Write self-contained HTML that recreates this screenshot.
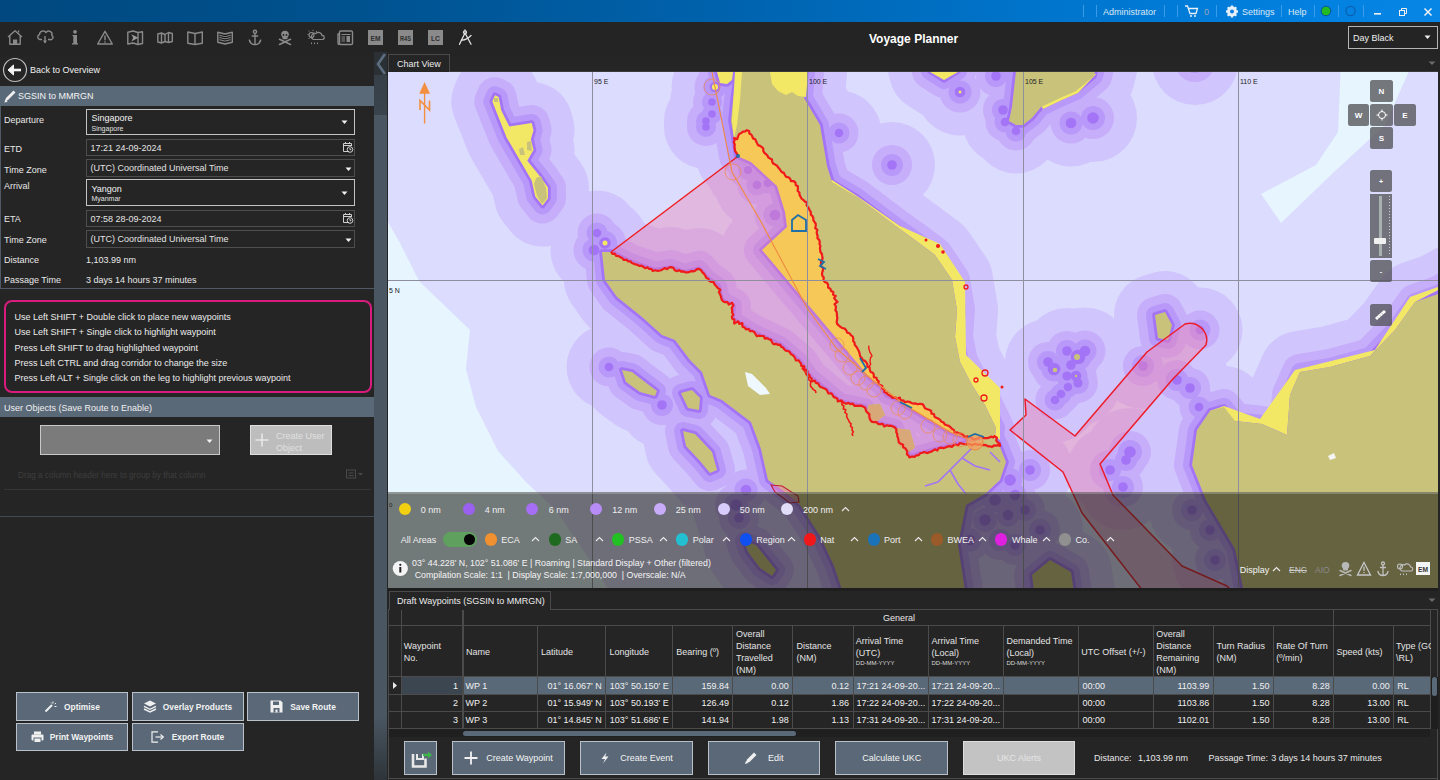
<!DOCTYPE html>
<html><head><meta charset="utf-8">
<style>
*{box-sizing:border-box}
html,body{margin:0;padding:0}
body{width:1440px;height:780px;overflow:hidden;background:#252525;position:relative;font-family:"Liberation Sans",sans-serif;font-size:9px;color:#e4e4e4}
.a{position:absolute}
.t{position:absolute;white-space:nowrap;line-height:12px}
.btn{position:absolute;background:#5a6877;border:1px solid #b9c2cb;color:#f2f2f2;font-weight:bold;font-size:8.4px;display:flex;align-items:center;justify-content:center;white-space:nowrap}
svg{position:absolute;overflow:visible}

</style></head>
<body>
<div class="a" style="left:0;top:0;width:1440px;height:22px;background:linear-gradient(90deg,#00487f 0%,#00528f 25%,#0062ad 50%,#0073c9 70%,#007ddb 85%,#0786e6 100%)"></div>
<svg style="left:0;top:0" width="1440" height="22">
<g stroke="#3a9be8" stroke-width="1">
<line x1="1083.5" y1="5" x2="1083.5" y2="17"/><line x1="1096.5" y1="5" x2="1096.5" y2="17"/>
<line x1="1164.5" y1="5" x2="1164.5" y2="17"/><line x1="1177.5" y1="5" x2="1177.5" y2="17"/>
<line x1="1216.5" y1="5" x2="1216.5" y2="17"/><line x1="1281.5" y1="5" x2="1281.5" y2="17"/>
<line x1="1314.5" y1="5" x2="1314.5" y2="17"/><line x1="1338.5" y1="5" x2="1338.5" y2="17"/>
<line x1="1363.5" y1="5" x2="1363.5" y2="17"/>
</g>
<!-- cart -->
<g fill="none" stroke="#e8f0f8" stroke-width="1.3">
<path d="M1185 6 L1187.5 6 L1190 13.5 L1196 13.5 L1197.5 8.5 L1188.5 8.5"/>
</g>
<circle cx="1191" cy="16" r="1" fill="#e8f0f8"/><circle cx="1195" cy="16" r="1" fill="#e8f0f8"/>
<!-- gear -->
<g transform="translate(1232,11.5)">
<circle r="3.8" fill="none" stroke="#e8f0f8" stroke-width="2.2"/>
<g fill="#e8f0f8"><rect x="-1.2" y="-6" width="2.4" height="12"/><rect x="-6" y="-1.2" width="12" height="2.4"/>
<rect x="-1.2" y="-6" width="2.4" height="12" transform="rotate(45)"/><rect x="-1.2" y="-6" width="2.4" height="12" transform="rotate(-45)"/></g>
<circle r="2" fill="#0a7fdf"/>
</g>
<circle cx="1326" cy="11" r="4.8" fill="#22bb22" stroke="#0a4f9a" stroke-width="1"/>
<circle cx="1350.5" cy="11" r="4.6" fill="none" stroke="#0a5fb0" stroke-width="1.3"/>
<rect x="1374" y="13" width="7" height="1.6" fill="#f0f0f0"/>
<g fill="none" stroke="#f0f0f0" stroke-width="1"><rect x="1399.5" y="10.5" width="5" height="5"/><path d="M1401.5 10.5 V8.5 H1406.5 V13.5 H1404.5"/></g>
<g stroke="#f4f4f4" stroke-width="1.4"><line x1="1424.5" y1="8.5" x2="1431.5" y2="15.5"/><line x1="1431.5" y1="8.5" x2="1424.5" y2="15.5"/></g>
</svg>
<div class="t" style="left:1103px;top:6px;color:#dce8f4">Administrator</div>
<div class="t" style="left:1204px;top:6px;color:#9aa8b8">0</div>
<div class="t" style="left:1242px;top:6px;color:#dce8f4">Settings</div>
<div class="t" style="left:1288px;top:6px;color:#dce8f4">Help</div>
<div class="a" style="left:0;top:22px;width:1440px;height:34px;background:#242424"></div>
<svg style="left:0;top:0" width="480" height="56">
<g fill="none" stroke="#8a8a8a" stroke-width="1.4" stroke-linejoin="round">
<!-- house -->
<path d="M8 37 L15 30.8 L22 37"/><path d="M18.5 32.5 V30.5"/><path d="M9.8 35.5 V44.3 H20.2 V35.5"/>
<!-- cloud -->
<path d="M42 39.5 H39.8 A2.6 2.6 0 0 1 39.5 34.5 A3.6 3.6 0 0 1 46 32.5 A3.3 3.3 0 0 1 51.8 35.5 A2.2 2.2 0 0 1 50 39.5 H48"/>
<path d="M45 36 V43"/>
<!-- warning -->
<path d="M105 31.3 L112.3 44 H97.7 Z"/>
<!-- map play -->
<path d="M127.8 32.3 L133 31 L138 32.5 L142.5 31.8 V43.5 L138 44.5 L133 43 L127.8 44 Z"/><path d="M138 32.5 V44.5"/>
<!-- folded map -->
<path d="M157.8 34 L161.5 33 L165 34.5 L168.5 32.5 L172.3 33.5 V41.5 L168.5 42.5 L165 41.5 L161.5 43 L157.8 42 Z"/><path d="M161.5 33 V43"/><path d="M165 34.5 V41.5"/><path d="M168.5 32.5 V42.5"/>
<!-- open book -->
<path d="M187.8 32 L195 33.5 L202.3 32 V43.3 L195 44.5 L187.8 43.3 Z"/><path d="M195 33.5 V44.5"/>
<!-- book lines -->
<path d="M217.8 32.3 L225 34 L232.3 32.3 V42.3 L225 44 L217.8 42.3 Z"/>
<!-- news -->
<rect x="339.5" y="31" width="13" height="13.5" rx="1.2"/><path d="M339.5 34 H338 V43 Q338 44.5 339.5 44.5"/>
<!-- compass -->
</g>
<g stroke="#8a8a8a" stroke-width="1">
<path d="M219.3 35.3 L225 36.6 L230.7 35.3 M219.3 37.5 L225 38.8 L230.7 37.5 M219.3 39.7 L225 41 L230.7 39.7"/>
<path d="M341.5 34.5 H350.5 M341.5 37 H345 M341.5 39 H345 M341.5 41 H345"/>
</g>
<rect x="346.5" y="36" width="3.5" height="6" fill="#8a8a8a"/>
<path d="M131.3 34.2 L138.3 37.8 L131.3 41.4 L133.2 37.8 Z" fill="#9a9a9a"/>
<g fill="#8a8a8a">
<rect x="13" y="39.5" width="4.2" height="5"/>
<path d="M43 40.5 H47 L45 43.5 Z"/>
<circle cx="75" cy="31.8" r="1.9"/><path d="M72.6 35 H77 V43.3 H78 V44.6 H72 V43.3 H73.3 V36.3 H72.6 Z"/>
<rect x="104.3" y="35.5" width="1.4" height="4.8"/><rect x="104.3" y="41.3" width="1.4" height="1.4"/>
</g>
<!-- anchor -->
<g fill="none" stroke="#8a8a8a" stroke-width="1.4" stroke-linecap="round">
<circle cx="255" cy="31.8" r="1.6"/><path d="M255 33.5 V44.5"/><path d="M252.3 36 H257.7"/><path d="M249.5 40.3 Q250.5 44.5 255 44.6 Q259.5 44.5 260.5 40.3"/>
</g>
<g fill="#8a8a8a"><path d="M248.6 39.5 L251 41.2 L249.2 42 Z"/><path d="M261.4 39.5 L259 41.2 L260.8 42 Z"/></g>
<!-- skull -->
<g fill="#8a8a8a">
<ellipse cx="285" cy="34.3" rx="3.8" ry="3.6"/><rect x="282.5" y="36" width="5" height="3.3" rx="1"/>
</g>
<g fill="#242424"><circle cx="283.5" cy="35" r="0.9"/><circle cx="286.5" cy="35" r="0.9"/></g>
<g stroke="#8a8a8a" stroke-width="1.6" stroke-linecap="round"><path d="M279.5 39.3 L290.5 44.5 M290.5 39.3 L279.5 44.5"/></g>
<!-- weather -->
<g fill="none" stroke="#8a8a8a" stroke-width="1.2">
<path d="M313.5 39.5 A3 3 0 0 1 316 33.5 A3.5 3.5 0 0 1 322 35.5 A2 2 0 0 1 322.5 39.5 Z"/>
<circle cx="311.5" cy="35" r="2.5"/>
</g>
<g fill="#8a8a8a"><circle cx="309" cy="31" r="0.6"/><circle cx="313" cy="30.3" r="0.6"/><circle cx="316.5" cy="31.3" r="0.6"/><circle cx="308" cy="34.5" r="0.6"/><circle cx="309" cy="38.5" r="0.6"/>
<rect x="311" y="42.5" width="1" height="1.6"/><rect x="314" y="42.5" width="1" height="1.6"/><rect x="317" y="42.5" width="1" height="1.6"/></g>
<!-- boxes -->
<rect x="368" y="30" width="15" height="15" fill="#8a8a8a"/>
<rect x="398" y="30" width="15" height="15" fill="#8a8a8a"/>
<rect x="428" y="30" width="15" height="15" fill="#8a8a8a"/>
<g fill="#2e2e2e" font-family="Liberation Sans" font-weight="bold">
<text x="375.5" y="41" font-size="7.5" text-anchor="middle" textLength="10" lengthAdjust="spacingAndGlyphs">EM</text>
<text x="405.5" y="40.8" font-size="7" text-anchor="middle" textLength="11" lengthAdjust="spacingAndGlyphs">R4S</text>
<text x="435.5" y="41.2" font-size="8" text-anchor="middle" textLength="9" lengthAdjust="spacingAndGlyphs">LC</text>
</g>
<!-- compass -->
<g fill="none" stroke="#e4e4e4" stroke-width="1.3" stroke-linecap="round">
<path d="M465 33 L459.5 44.3"/><path d="M465 33 L471 44.3"/><circle cx="465" cy="32.3" r="1.5"/><path d="M465 30 V30.8"/><path d="M461.5 40 Q466 40.5 471 35.5"/>
</g>
</svg>
<div class="t" style="left:869px;top:32.3px;font-size:12px;font-weight:bold;color:#fff;line-height:14px">Voyage Planner</div>
<div class="a" style="left:1348px;top:26px;width:90px;height:23px;border:1px solid #b4b4b4"></div>
<div class="t" style="left:1353px;top:32px;color:#f0f0f0">Day Black</div>
<svg style="left:1424px;top:35px" width="8" height="5"><path d="M0.5 0.5 H6.5 L3.5 4 Z" fill="#f0f0f0"/></svg>
<svg style="left:0;top:56px" width="40" height="30"><circle cx="15" cy="14" r="11.5" fill="none" stroke="#bdbdbd" stroke-width="1.2"/><path d="M9 14 H21" stroke="#f4f4f4" stroke-width="2.6"/><path d="M8 14 L13.5 9 L13.5 19 Z" fill="#f4f4f4" stroke="#f4f4f4" stroke-width="1" stroke-linejoin="round"/></svg>
<div class="t" style="left:30px;top:64.16px;font-size:9px;color:#f0f0f0;">Back to Overview</div>
<div class="a" style="left:0px;top:86px;width:375px;height:20px;background:#5a6978"></div>
<svg style="left:3px;top:88px" width="14" height="16"><path d="M2 13.5 L3 10 L10.5 2.5 L12.5 4.5 L5 12 Z" fill="#f0f0f0"/><path d="M1.5 14.5 L2.3 11.3 L4.7 13.7 Z" fill="#f0f0f0"/></svg>
<div class="t" style="left:18px;top:90.46px;font-size:9px;color:#f4f4f4;">SGSIN to MMRGN</div>
<div class="a" style="left:0px;top:106px;width:1px;height:183px;background:#4f5a66"></div>
<div class="a" style="left:0px;top:288px;width:375px;height:1px;background:#4f5a66"></div>
<div class="t" style="left:4px;top:113.66px;font-size:9px;color:#e8e8e8;">Departure</div>
<div class="t" style="left:4px;top:142.66px;font-size:9px;color:#e8e8e8;">ETD</div>
<div class="t" style="left:4px;top:163.56px;font-size:9px;color:#e8e8e8;">Time Zone</div>
<div class="t" style="left:4px;top:180.46px;font-size:9px;color:#e8e8e8;">Arrival</div>
<div class="t" style="left:4px;top:213.16px;font-size:9px;color:#e8e8e8;">ETA</div>
<div class="t" style="left:4px;top:233.56px;font-size:9px;color:#e8e8e8;">Time Zone</div>
<div class="t" style="left:4px;top:254.46px;font-size:9px;color:#e8e8e8;">Distance</div>
<div class="t" style="left:4px;top:273.86px;font-size:9px;color:#e8e8e8;">Passage Time</div>
<div class="a" style="left:86px;top:109px;width:269px;height:26px;border:1px solid #c4c4c4"></div>
<div class="t" style="left:91.5px;top:111.66px;font-size:9px;color:#f2f2f2;">Singapore</div>
<div class="t" style="left:91.5px;top:122.93px;font-size:7px;color:#e0e0e0;">Singapore</div>
<div class="a" style="left:86px;top:179px;width:269px;height:27px;border:1px solid #c4c4c4"></div>
<div class="t" style="left:91.5px;top:182.76px;font-size:9px;color:#f2f2f2;">Yangon</div>
<div class="t" style="left:91.5px;top:193.43px;font-size:7px;color:#e0e0e0;">Myanmar</div>
<svg style="left:341.0px;top:119.5px" width="8" height="5"><path d="M0.5 0.5 H6.5 L3.5 4 Z" fill="#f0f0f0"/></svg>
<svg style="left:341.0px;top:190.5px" width="8" height="5"><path d="M0.5 0.5 H6.5 L3.5 4 Z" fill="#f0f0f0"/></svg>
<div class="a" style="left:86px;top:139px;width:269px;height:17px;border:1px solid #4e4e4e"></div>
<div class="t" style="left:90.5px;top:141.86px;font-size:9px;color:#e4e4e4;">17:21 24-09-2024</div>
<svg style="left:342px;top:141px" width="12" height="13"><g fill="none" stroke="#cfcfcf" stroke-width="1"><path d="M7 10.5 H1.5 V2.5 H9.5 V5"/><path d="M1.5 4.5 H9.5"/><circle cx="8" cy="8.5" r="2.8"/><path d="M8 7 V8.7 H9.3"/><path d="M3.5 1 V3 M7.5 1 V3"/></g></svg>
<div class="a" style="left:86px;top:210px;width:269px;height:17px;border:1px solid #4e4e4e"></div>
<div class="t" style="left:90.5px;top:212.86px;font-size:9px;color:#e4e4e4;">07:58 28-09-2024</div>
<svg style="left:342px;top:212px" width="12" height="13"><g fill="none" stroke="#cfcfcf" stroke-width="1"><path d="M7 10.5 H1.5 V2.5 H9.5 V5"/><path d="M1.5 4.5 H9.5"/><circle cx="8" cy="8.5" r="2.8"/><path d="M8 7 V8.7 H9.3"/><path d="M3.5 1 V3 M7.5 1 V3"/></g></svg>
<div class="a" style="left:86px;top:159px;width:269px;height:18px;border:1px solid #4e4e4e"></div>
<div class="t" style="left:90.5px;top:162.16px;font-size:9px;color:#e4e4e4;">(UTC) Coordinated Universal Time</div>
<svg style="left:345.0px;top:166.5px" width="8" height="5"><path d="M0.5 0.5 H6.5 L3.5 4 Z" fill="#f0f0f0"/></svg>
<div class="a" style="left:86px;top:230px;width:269px;height:18px;border:1px solid #4e4e4e"></div>
<div class="t" style="left:90.5px;top:233.16px;font-size:9px;color:#e4e4e4;">(UTC) Coordinated Universal Time</div>
<svg style="left:345.0px;top:237.5px" width="8" height="5"><path d="M0.5 0.5 H6.5 L3.5 4 Z" fill="#f0f0f0"/></svg>
<div class="t" style="left:86px;top:254.46px;font-size:9px;color:#e8e8e8;">1,103.99 nm</div>
<div class="t" style="left:86px;top:273.86px;font-size:9px;color:#e8e8e8;">3 days 14 hours 37 minutes</div>
<div class="a" style="left:3.5px;top:300px;width:368px;height:93px;border:2px solid #d81b7e;border-radius:8px"></div>
<div class="t" style="left:14.5px;top:311.36px;font-size:9px;color:#ececec;">Use Left SHIFT + Double click to place new waypoints</div>
<div class="t" style="left:14.5px;top:326.43px;font-size:9px;color:#ececec;">Use Left SHIFT + Single click to highlight waypoint</div>
<div class="t" style="left:14.5px;top:341.50px;font-size:9px;color:#ececec;">Press Left SHIFT to drag highlighted waypoint</div>
<div class="t" style="left:14.5px;top:356.57px;font-size:9px;color:#ececec;">Press Left CTRL and drag corridor to change the size</div>
<div class="t" style="left:14.5px;top:371.64px;font-size:9px;color:#ececec;">Press Left ALT + Single click on the leg to highlight previous waypoint</div>
<div class="a" style="left:0px;top:397px;width:375px;height:20px;background:#5a6978"></div>
<div class="t" style="left:4px;top:401.56px;font-size:9px;color:#f0f0f0;">User Objects (Save Route to Enable)</div>
<div class="a" style="left:40px;top:425px;width:180px;height:30px;background:#7b7b7b;border:1px solid #c8c8c8"></div>
<svg style="left:206.0px;top:438.5px" width="8" height="5"><path d="M0.5 0.5 H6.5 L3.5 4 Z" fill="#f0f0f0"/></svg>
<div class="a" style="left:250px;top:425px;width:82px;height:30px;background:#bdbdbd;border:1px solid #dedede"></div>
<svg style="left:254px;top:432px" width="16" height="16"><path d="M8 1.5 V14.5 M1.5 8 H14.5" stroke="#e6e6e6" stroke-width="1.6"/></svg>
<div class="t" style="left:276px;top:429.66px;font-size:9px;color:#e0e0e0;">Create User</div>
<div class="t" style="left:276px;top:441.66px;font-size:9px;color:#e0e0e0;">Object</div>
<div class="t" style="left:18px;top:469.55px;font-size:8.2px;color:#3e3e3e;">Drag a column header here to group by that column</div>
<svg style="left:345px;top:468px" width="22" height="14"><rect x="1.5" y="2" width="9" height="8" fill="none" stroke="#4a4a4a" stroke-width="1"/><path d="M3.5 5 H8.5 M3.5 7.5 H8.5" stroke="#4a4a4a"/><path d="M13 5 H18 L15.5 7.5 Z" fill="#4a4a4a"/></svg>
<div class="a" style="left:4px;top:489px;width:367px;height:1px;background:#353535"></div>
<div class="a" style="left:0px;top:516px;width:375px;height:1px;background:#414b55"></div>
<div class="a" style="left:374px;top:52px;width:13px;height:728px;background:linear-gradient(180deg,#2b3035 0px,#2b3035 23px,#363f47 23px,#3a444d 63px,#4a5763 63px,#4a5763 663px,#2e3439 728px)"></div>
<svg style="left:375px;top:52px" width="12" height="36"><path d="M10 2 L3 12 L10 22" fill="none" stroke="#5b6f80" stroke-width="2.6"/></svg>
<div class="btn" style="left:16px;top:692px;width:112px;height:29px"><svg width="14" height="12" style="position:relative;margin-right:6px"><path d="M1.5 10.5 L8 4" stroke="#f0f0f0" stroke-width="2"/><path d="M9 0.5 V2.5 M12 2 L10.8 3.2 M12.5 5.5 H10.5 M7 1.5 L8 2.5" stroke="#f0f0f0" stroke-width="1"/></svg><span>Optimise</span></div>
<div class="btn" style="left:131.5px;top:692px;width:112px;height:29px"><svg width="14" height="13" style="position:relative;margin-right:6px"><path d="M7 0.5 L13 3.5 L7 6.5 L1 3.5 Z" fill="#f0f0f0"/><path d="M1 6.3 L7 9.3 L13 6.3 M1 9 L7 12 L13 9" fill="none" stroke="#f0f0f0" stroke-width="1.4"/></svg><span>Overlay Products</span></div>
<div class="btn" style="left:247px;top:692px;width:112px;height:29px"><svg width="13" height="13" style="position:relative;margin-right:7px"><path d="M0.5 0.5 H10.5 L12.5 2.5 V12.5 H0.5 Z" fill="#f0f0f0"/><rect x="3" y="1.5" width="6" height="3.5" fill="#5a6877"/><rect x="3.5" y="8" width="6" height="4.5" fill="#5a6877"/><rect x="5.5" y="9.5" width="2" height="3" fill="#f0f0f0"/></svg><span>Save Route</span></div>
<div class="btn" style="left:16px;top:722.5px;width:112px;height:28px"><svg width="13" height="12" style="position:relative;margin-right:6px"><rect x="3" y="0.5" width="7" height="3" fill="#f0f0f0"/><rect x="0.5" y="3.5" width="12" height="6" rx="1" fill="#f0f0f0"/><rect x="3" y="7" width="7" height="4.5" fill="#f0f0f0" stroke="#5a6877" stroke-width="1"/></svg><span>Print Waypoints</span></div>
<div class="btn" style="left:131.5px;top:722.5px;width:112px;height:28px"><svg width="14" height="12" style="position:relative;margin-right:7px"><path d="M7 0.8 H1 V11.2 H7" fill="none" stroke="#f0f0f0" stroke-width="1.2"/><path d="M4.5 6 H12" stroke="#f0f0f0" stroke-width="1.2"/><path d="M9.5 3.5 L12.3 6 L9.5 8.5" fill="none" stroke="#f0f0f0" stroke-width="1.2"/></svg><span>Export Route</span></div><svg style="left:388px;top:72px;overflow:hidden" width="1050" height="516" viewBox="388 72 1050 516">
<rect x="388" y="72" width="1050" height="516" fill="#dcdcfe"/>
<path d="M388,222 L400,243 L419,281 L470,330 L466,369 L476,407 L498,451 L526,482 L556,510 L590,560 L615,600 L388,600 Z" fill="#e6f5fe"/>
<path d="M1341,60 L1338,132 L1316,165 L1261,194 L1281,223 L1334,172 L1385,125 L1414,60 Z" fill="#e6f5fe"/>
<g fill="#d0c5fc" stroke="#d0c5fc" stroke-width="82" stroke-linejoin="round"><path d="M717,60 L733,60 L733,72 L732,80 L727,84 L720,83 L717,72 Z"/><path d="M602,252 L605,280 L617,297 L642,317 L662,335 L675,340 L690,360 L702,372 L710,395 L722,400 L751,422 L761,449 L768,480 L786,493 L800,505 L820,536 L834,566 L842,590 L850,640 L960,640 L965,590 L958,545 L966,505 L985,494 L1000,480 L1006,462 L1000,447 L995,437 L960,444 L935,450 L910,457 L900,442 L895,428 L872,422 L865,407 L840,402 L810,377 L800,362 L780,345 L752,332 L732,319 L733,306 L721,300 L718,286 L708,279 L699,269 L685,273 L671,268 L655,270.6 L630,262 L611,252 Z"/><path d="M737,50 L737,71 L733,100 L731,121 L734,138 L747,130 L760,146 L780,171 L795,183 L803,200 L814,220 L821,250 L823,278 L835,296 L837,324 L851,335 L862,358 L869,368 L877,380 L887,395 L905,402 L922,405 L940,420 L955,432 L975,440 L995,436 L996,428 L985,405 L972,385 L960,362 L955,337 L957,310 L952,280 L935,255 L915,240 L897,227 L857,197 L832,182 L827,166 L820,125 L804,98 L806,71 L806,50 Z"/><path d="M1016,50 L1016,71 L1012,107 L1009,121 L1016,125 L1023,125 L1032,118 L1041,107 L1060,98 L1076,91 L1094,76 L1100,50 Z"/><path d="M925,50 L930,71 L944,80 L958,71 L965,50 Z"/><path d="M1192,465 L1197,430 L1210,411 L1224,407 L1235,421 L1262,424 L1287,435 L1290,395 L1300,372 L1330,367 L1370,356 L1395,330 L1415,302 L1438,294 L1500,260 L1500,700 L1243,700 L1243,588 L1235,549 L1206,500 Z"/><path d="M1032,575 L1050,560 L1071,572 L1075,600 L1035,600 Z"/><path d="M495,95.2 L498.6,97 L501.3,110.5 L509.3,126.6 L531.7,123 L533.5,130.2 L530.9,139.2 L533.5,150 L527.3,160.7 L538.9,175 L547.9,187.6 L547.9,198.4 L542.5,205.6 L535.3,196.6 L531.7,180.4 L506.6,137.4 L492.3,101.5 Z"/><path d="M622,370 L632,372 L645,382 L657,391 L655,396 L640,392 L626,382 Z"/><path d="M681,393 L692,390 L700,398 L699,410 L688,408 Z"/><path d="M683,431 L695,434 L712,452 L717,470 L710,473 L700,461 L686,446 Z"/><path d="M744,541 L756,545 L776,570 L772,576 L760,568 L748,552 Z"/><path d="M1155,315 L1165,312 L1172,325 L1168,340 L1158,338 Z"/><path d="M737,156 L734,138 L747,130 L760,146 L780,171 L795,183 L803,200 L814,220 L821,250 L823,278 L835,296 L837,324 L851,335 L862,358 L869,368 L877,380 L887,395 L905,402 L922,405 L940,420 L955,432 L975,440 L950,432 L905,405 L869,377 L762,250 L787,227 L785,212 L777,186 L751,162 Z"/></g><g fill="#d0c5fc"><circle cx="757" cy="185" r="42.5"/><circle cx="768" cy="183" r="42.5"/><circle cx="775" cy="215" r="43.5"/><circle cx="748" cy="170" r="42.2"/><circle cx="715" cy="87" r="43.5"/><circle cx="712" cy="102" r="42"/><circle cx="712" cy="114" r="42"/><circle cx="706" cy="121" r="42"/><circle cx="706" cy="127" r="42"/><circle cx="597" cy="233" r="42.5"/><circle cx="605" cy="243" r="44"/><circle cx="594" cy="250" r="43.5"/><circle cx="609" cy="367" r="42.5"/><circle cx="662" cy="405" r="43"/><circle cx="746" cy="490" r="43.5"/><circle cx="736" cy="505" r="44"/><circle cx="739" cy="518" r="43"/><circle cx="839" cy="133" r="42.5"/><circle cx="892" cy="165" r="43"/><circle cx="960" cy="92" r="43.5"/><circle cx="996" cy="76" r="43"/><circle cx="1003" cy="110" r="43"/><circle cx="1005" cy="122" r="42.5"/><circle cx="1016" cy="131" r="42.5"/><circle cx="1054" cy="369" r="44.5"/><circle cx="1078" cy="357" r="45.5"/><circle cx="1067" cy="351" r="43"/><circle cx="1085" cy="351" r="43.5"/><circle cx="1067" cy="376" r="42.8"/><circle cx="1076" cy="376" r="43.5"/><circle cx="1078" cy="383" r="42.8"/><circle cx="1068" cy="387" r="42.5"/><circle cx="1061" cy="394" r="42.5"/><circle cx="1048" cy="362" r="43"/><circle cx="1071" cy="365" r="43"/><circle cx="1143" cy="366" r="43"/><circle cx="1071" cy="123" r="43.5"/><circle cx="1093" cy="118" r="44"/><circle cx="1195" cy="62" r="43"/><circle cx="1177" cy="380" r="43"/><circle cx="1190" cy="388" r="43"/><circle cx="1199" cy="407" r="42.5"/><circle cx="1130" cy="452" r="44"/><circle cx="1126" cy="460" r="43"/><circle cx="1110" cy="470" r="43"/><circle cx="1123" cy="487" r="43"/><circle cx="1055" cy="400" r="42.5"/><circle cx="1200" cy="330" r="42.5"/><circle cx="1228" cy="418" r="42.5"/><circle cx="1218" cy="440" r="42.5"/><circle cx="1211" cy="464" r="42.5"/><circle cx="1214" cy="486" r="42.5"/><circle cx="1192" cy="510" r="43"/><circle cx="1210" cy="530" r="43"/><circle cx="1226" cy="528" r="43"/><circle cx="1215" cy="560" r="43"/><circle cx="990" cy="455" r="44"/><circle cx="1000" cy="468" r="44"/><circle cx="985" cy="478" r="43.5"/><circle cx="1010" cy="480" r="44"/><circle cx="1015" cy="495" r="43.5"/><circle cx="975" cy="490" r="43"/><circle cx="995" cy="500" r="44"/><circle cx="1008" cy="515" r="43.5"/><circle cx="985" cy="520" r="44"/><circle cx="970" cy="540" r="43.5"/><circle cx="1000" cy="540" r="43"/><circle cx="1025" cy="510" r="43"/><circle cx="1015" cy="545" r="43"/><circle cx="1040" cy="530" r="43"/><circle cx="1030" cy="470" r="43"/></g>
<g fill="#c6aefa" stroke="#c6aefa" stroke-width="36" stroke-linejoin="round"><path d="M717,60 L733,60 L733,72 L732,80 L727,84 L720,83 L717,72 Z"/><path d="M602,252 L605,280 L617,297 L642,317 L662,335 L675,340 L690,360 L702,372 L710,395 L722,400 L751,422 L761,449 L768,480 L786,493 L800,505 L820,536 L834,566 L842,590 L850,640 L960,640 L965,590 L958,545 L966,505 L985,494 L1000,480 L1006,462 L1000,447 L995,437 L960,444 L935,450 L910,457 L900,442 L895,428 L872,422 L865,407 L840,402 L810,377 L800,362 L780,345 L752,332 L732,319 L733,306 L721,300 L718,286 L708,279 L699,269 L685,273 L671,268 L655,270.6 L630,262 L611,252 Z"/><path d="M737,50 L737,71 L733,100 L731,121 L734,138 L747,130 L760,146 L780,171 L795,183 L803,200 L814,220 L821,250 L823,278 L835,296 L837,324 L851,335 L862,358 L869,368 L877,380 L887,395 L905,402 L922,405 L940,420 L955,432 L975,440 L995,436 L996,428 L985,405 L972,385 L960,362 L955,337 L957,310 L952,280 L935,255 L915,240 L897,227 L857,197 L832,182 L827,166 L820,125 L804,98 L806,71 L806,50 Z"/><path d="M1016,50 L1016,71 L1012,107 L1009,121 L1016,125 L1023,125 L1032,118 L1041,107 L1060,98 L1076,91 L1094,76 L1100,50 Z"/><path d="M925,50 L930,71 L944,80 L958,71 L965,50 Z"/><path d="M1192,465 L1197,430 L1210,411 L1224,407 L1235,421 L1262,424 L1287,435 L1290,395 L1300,372 L1330,367 L1370,356 L1395,330 L1415,302 L1438,294 L1500,260 L1500,700 L1243,700 L1243,588 L1235,549 L1206,500 Z"/><path d="M1032,575 L1050,560 L1071,572 L1075,600 L1035,600 Z"/><path d="M495,95.2 L498.6,97 L501.3,110.5 L509.3,126.6 L531.7,123 L533.5,130.2 L530.9,139.2 L533.5,150 L527.3,160.7 L538.9,175 L547.9,187.6 L547.9,198.4 L542.5,205.6 L535.3,196.6 L531.7,180.4 L506.6,137.4 L492.3,101.5 Z"/><path d="M622,370 L632,372 L645,382 L657,391 L655,396 L640,392 L626,382 Z"/><path d="M681,393 L692,390 L700,398 L699,410 L688,408 Z"/><path d="M683,431 L695,434 L712,452 L717,470 L710,473 L700,461 L686,446 Z"/><path d="M744,541 L756,545 L776,570 L772,576 L760,568 L748,552 Z"/><path d="M1155,315 L1165,312 L1172,325 L1168,340 L1158,338 Z"/><path d="M737,156 L734,138 L747,130 L760,146 L780,171 L795,183 L803,200 L814,220 L821,250 L823,278 L835,296 L837,324 L851,335 L862,358 L869,368 L877,380 L887,395 L905,402 L922,405 L940,420 L955,432 L975,440 L950,432 L905,405 L869,377 L762,250 L787,227 L785,212 L777,186 L751,162 Z"/></g><g fill="#c6aefa"><circle cx="757" cy="185" r="19.5"/><circle cx="768" cy="183" r="19.5"/><circle cx="775" cy="215" r="20.5"/><circle cx="748" cy="170" r="19.2"/><circle cx="715" cy="87" r="20.5"/><circle cx="712" cy="102" r="19"/><circle cx="712" cy="114" r="19"/><circle cx="706" cy="121" r="19"/><circle cx="706" cy="127" r="19"/><circle cx="597" cy="233" r="19.5"/><circle cx="605" cy="243" r="21"/><circle cx="594" cy="250" r="20.5"/><circle cx="609" cy="367" r="19.5"/><circle cx="662" cy="405" r="20"/><circle cx="746" cy="490" r="20.5"/><circle cx="736" cy="505" r="21"/><circle cx="739" cy="518" r="20"/><circle cx="839" cy="133" r="19.5"/><circle cx="892" cy="165" r="20"/><circle cx="960" cy="92" r="20.5"/><circle cx="996" cy="76" r="20"/><circle cx="1003" cy="110" r="20"/><circle cx="1005" cy="122" r="19.5"/><circle cx="1016" cy="131" r="19.5"/><circle cx="1054" cy="369" r="21.5"/><circle cx="1078" cy="357" r="22.5"/><circle cx="1067" cy="351" r="20"/><circle cx="1085" cy="351" r="20.5"/><circle cx="1067" cy="376" r="19.8"/><circle cx="1076" cy="376" r="20.5"/><circle cx="1078" cy="383" r="19.8"/><circle cx="1068" cy="387" r="19.5"/><circle cx="1061" cy="394" r="19.5"/><circle cx="1048" cy="362" r="20"/><circle cx="1071" cy="365" r="20"/><circle cx="1143" cy="366" r="20"/><circle cx="1071" cy="123" r="20.5"/><circle cx="1093" cy="118" r="21"/><circle cx="1195" cy="62" r="20"/><circle cx="1177" cy="380" r="20"/><circle cx="1190" cy="388" r="20"/><circle cx="1199" cy="407" r="19.5"/><circle cx="1130" cy="452" r="21"/><circle cx="1126" cy="460" r="20"/><circle cx="1110" cy="470" r="20"/><circle cx="1123" cy="487" r="20"/><circle cx="1055" cy="400" r="19.5"/><circle cx="1200" cy="330" r="19.5"/><circle cx="1228" cy="418" r="19.5"/><circle cx="1218" cy="440" r="19.5"/><circle cx="1211" cy="464" r="19.5"/><circle cx="1214" cy="486" r="19.5"/><circle cx="1192" cy="510" r="20"/><circle cx="1210" cy="530" r="20"/><circle cx="1226" cy="528" r="20"/><circle cx="1215" cy="560" r="20"/><circle cx="990" cy="455" r="21"/><circle cx="1000" cy="468" r="21"/><circle cx="985" cy="478" r="20.5"/><circle cx="1010" cy="480" r="21"/><circle cx="1015" cy="495" r="20.5"/><circle cx="975" cy="490" r="20"/><circle cx="995" cy="500" r="21"/><circle cx="1008" cy="515" r="20.5"/><circle cx="985" cy="520" r="21"/><circle cx="970" cy="540" r="20.5"/><circle cx="1000" cy="540" r="20"/><circle cx="1025" cy="510" r="20"/><circle cx="1015" cy="545" r="20"/><circle cx="1040" cy="530" r="20"/><circle cx="1030" cy="470" r="20"/></g>
<g fill="#b898f8" stroke="#b898f8" stroke-width="18" stroke-linejoin="round"><path d="M717,60 L733,60 L733,72 L732,80 L727,84 L720,83 L717,72 Z"/><path d="M602,252 L605,280 L617,297 L642,317 L662,335 L675,340 L690,360 L702,372 L710,395 L722,400 L751,422 L761,449 L768,480 L786,493 L800,505 L820,536 L834,566 L842,590 L850,640 L960,640 L965,590 L958,545 L966,505 L985,494 L1000,480 L1006,462 L1000,447 L995,437 L960,444 L935,450 L910,457 L900,442 L895,428 L872,422 L865,407 L840,402 L810,377 L800,362 L780,345 L752,332 L732,319 L733,306 L721,300 L718,286 L708,279 L699,269 L685,273 L671,268 L655,270.6 L630,262 L611,252 Z"/><path d="M737,50 L737,71 L733,100 L731,121 L734,138 L747,130 L760,146 L780,171 L795,183 L803,200 L814,220 L821,250 L823,278 L835,296 L837,324 L851,335 L862,358 L869,368 L877,380 L887,395 L905,402 L922,405 L940,420 L955,432 L975,440 L995,436 L996,428 L985,405 L972,385 L960,362 L955,337 L957,310 L952,280 L935,255 L915,240 L897,227 L857,197 L832,182 L827,166 L820,125 L804,98 L806,71 L806,50 Z"/><path d="M1016,50 L1016,71 L1012,107 L1009,121 L1016,125 L1023,125 L1032,118 L1041,107 L1060,98 L1076,91 L1094,76 L1100,50 Z"/><path d="M925,50 L930,71 L944,80 L958,71 L965,50 Z"/><path d="M1192,465 L1197,430 L1210,411 L1224,407 L1235,421 L1262,424 L1287,435 L1290,395 L1300,372 L1330,367 L1370,356 L1395,330 L1415,302 L1438,294 L1500,260 L1500,700 L1243,700 L1243,588 L1235,549 L1206,500 Z"/><path d="M1032,575 L1050,560 L1071,572 L1075,600 L1035,600 Z"/><path d="M495,95.2 L498.6,97 L501.3,110.5 L509.3,126.6 L531.7,123 L533.5,130.2 L530.9,139.2 L533.5,150 L527.3,160.7 L538.9,175 L547.9,187.6 L547.9,198.4 L542.5,205.6 L535.3,196.6 L531.7,180.4 L506.6,137.4 L492.3,101.5 Z"/><path d="M622,370 L632,372 L645,382 L657,391 L655,396 L640,392 L626,382 Z"/><path d="M681,393 L692,390 L700,398 L699,410 L688,408 Z"/><path d="M683,431 L695,434 L712,452 L717,470 L710,473 L700,461 L686,446 Z"/><path d="M744,541 L756,545 L776,570 L772,576 L760,568 L748,552 Z"/><path d="M1155,315 L1165,312 L1172,325 L1168,340 L1158,338 Z"/><path d="M737,156 L734,138 L747,130 L760,146 L780,171 L795,183 L803,200 L814,220 L821,250 L823,278 L835,296 L837,324 L851,335 L862,358 L869,368 L877,380 L887,395 L905,402 L922,405 L940,420 L955,432 L975,440 L950,432 L905,405 L869,377 L762,250 L787,227 L785,212 L777,186 L751,162 Z"/></g><g fill="#b898f8"><circle cx="757" cy="185" r="10.5"/><circle cx="768" cy="183" r="10.5"/><circle cx="775" cy="215" r="11.5"/><circle cx="748" cy="170" r="10.2"/><circle cx="715" cy="87" r="11.5"/><circle cx="712" cy="102" r="10"/><circle cx="712" cy="114" r="10"/><circle cx="706" cy="121" r="10"/><circle cx="706" cy="127" r="10"/><circle cx="597" cy="233" r="10.5"/><circle cx="605" cy="243" r="12"/><circle cx="594" cy="250" r="11.5"/><circle cx="609" cy="367" r="10.5"/><circle cx="662" cy="405" r="11"/><circle cx="746" cy="490" r="11.5"/><circle cx="736" cy="505" r="12"/><circle cx="739" cy="518" r="11"/><circle cx="839" cy="133" r="10.5"/><circle cx="892" cy="165" r="11"/><circle cx="960" cy="92" r="11.5"/><circle cx="996" cy="76" r="11"/><circle cx="1003" cy="110" r="11"/><circle cx="1005" cy="122" r="10.5"/><circle cx="1016" cy="131" r="10.5"/><circle cx="1054" cy="369" r="12.5"/><circle cx="1078" cy="357" r="13.5"/><circle cx="1067" cy="351" r="11"/><circle cx="1085" cy="351" r="11.5"/><circle cx="1067" cy="376" r="10.8"/><circle cx="1076" cy="376" r="11.5"/><circle cx="1078" cy="383" r="10.8"/><circle cx="1068" cy="387" r="10.5"/><circle cx="1061" cy="394" r="10.5"/><circle cx="1048" cy="362" r="11"/><circle cx="1071" cy="365" r="11"/><circle cx="1143" cy="366" r="11"/><circle cx="1071" cy="123" r="11.5"/><circle cx="1093" cy="118" r="12"/><circle cx="1195" cy="62" r="11"/><circle cx="1177" cy="380" r="11"/><circle cx="1190" cy="388" r="11"/><circle cx="1199" cy="407" r="10.5"/><circle cx="1130" cy="452" r="12"/><circle cx="1126" cy="460" r="11"/><circle cx="1110" cy="470" r="11"/><circle cx="1123" cy="487" r="11"/><circle cx="1055" cy="400" r="10.5"/><circle cx="1200" cy="330" r="10.5"/><circle cx="1228" cy="418" r="10.5"/><circle cx="1218" cy="440" r="10.5"/><circle cx="1211" cy="464" r="10.5"/><circle cx="1214" cy="486" r="10.5"/><circle cx="1192" cy="510" r="11"/><circle cx="1210" cy="530" r="11"/><circle cx="1226" cy="528" r="11"/><circle cx="1215" cy="560" r="11"/><circle cx="990" cy="455" r="12"/><circle cx="1000" cy="468" r="12"/><circle cx="985" cy="478" r="11.5"/><circle cx="1010" cy="480" r="12"/><circle cx="1015" cy="495" r="11.5"/><circle cx="975" cy="490" r="11"/><circle cx="995" cy="500" r="12"/><circle cx="1008" cy="515" r="11.5"/><circle cx="985" cy="520" r="12"/><circle cx="970" cy="540" r="11.5"/><circle cx="1000" cy="540" r="11"/><circle cx="1025" cy="510" r="11"/><circle cx="1015" cy="545" r="11"/><circle cx="1040" cy="530" r="11"/><circle cx="1030" cy="470" r="11"/></g>
<g fill="#a474f6" stroke="#a474f6" stroke-width="5.6" stroke-linejoin="round"><path d="M717,60 L733,60 L733,72 L732,80 L727,84 L720,83 L717,72 Z"/><path d="M602,252 L605,280 L617,297 L642,317 L662,335 L675,340 L690,360 L702,372 L710,395 L722,400 L751,422 L761,449 L768,480 L786,493 L800,505 L820,536 L834,566 L842,590 L850,640 L960,640 L965,590 L958,545 L966,505 L985,494 L1000,480 L1006,462 L1000,447 L995,437 L960,444 L935,450 L910,457 L900,442 L895,428 L872,422 L865,407 L840,402 L810,377 L800,362 L780,345 L752,332 L732,319 L733,306 L721,300 L718,286 L708,279 L699,269 L685,273 L671,268 L655,270.6 L630,262 L611,252 Z"/><path d="M737,50 L737,71 L733,100 L731,121 L734,138 L747,130 L760,146 L780,171 L795,183 L803,200 L814,220 L821,250 L823,278 L835,296 L837,324 L851,335 L862,358 L869,368 L877,380 L887,395 L905,402 L922,405 L940,420 L955,432 L975,440 L995,436 L996,428 L985,405 L972,385 L960,362 L955,337 L957,310 L952,280 L935,255 L915,240 L897,227 L857,197 L832,182 L827,166 L820,125 L804,98 L806,71 L806,50 Z"/><path d="M1016,50 L1016,71 L1012,107 L1009,121 L1016,125 L1023,125 L1032,118 L1041,107 L1060,98 L1076,91 L1094,76 L1100,50 Z"/><path d="M925,50 L930,71 L944,80 L958,71 L965,50 Z"/><path d="M1192,465 L1197,430 L1210,411 L1224,407 L1235,421 L1262,424 L1287,435 L1290,395 L1300,372 L1330,367 L1370,356 L1395,330 L1415,302 L1438,294 L1500,260 L1500,700 L1243,700 L1243,588 L1235,549 L1206,500 Z"/><path d="M1032,575 L1050,560 L1071,572 L1075,600 L1035,600 Z"/><path d="M495,95.2 L498.6,97 L501.3,110.5 L509.3,126.6 L531.7,123 L533.5,130.2 L530.9,139.2 L533.5,150 L527.3,160.7 L538.9,175 L547.9,187.6 L547.9,198.4 L542.5,205.6 L535.3,196.6 L531.7,180.4 L506.6,137.4 L492.3,101.5 Z"/><path d="M622,370 L632,372 L645,382 L657,391 L655,396 L640,392 L626,382 Z"/><path d="M681,393 L692,390 L700,398 L699,410 L688,408 Z"/><path d="M683,431 L695,434 L712,452 L717,470 L710,473 L700,461 L686,446 Z"/><path d="M744,541 L756,545 L776,570 L772,576 L760,568 L748,552 Z"/><path d="M1155,315 L1165,312 L1172,325 L1168,340 L1158,338 Z"/><path d="M737,156 L734,138 L747,130 L760,146 L780,171 L795,183 L803,200 L814,220 L821,250 L823,278 L835,296 L837,324 L851,335 L862,358 L869,368 L877,380 L887,395 L905,402 L922,405 L940,420 L955,432 L975,440 L950,432 L905,405 L869,377 L762,250 L787,227 L785,212 L777,186 L751,162 Z"/></g><g fill="#a474f6"><circle cx="757" cy="185" r="4.3"/><circle cx="768" cy="183" r="4.3"/><circle cx="775" cy="215" r="5.3"/><circle cx="748" cy="170" r="4.0"/><circle cx="715" cy="87" r="5.3"/><circle cx="712" cy="102" r="3.8"/><circle cx="712" cy="114" r="3.8"/><circle cx="706" cy="121" r="3.8"/><circle cx="706" cy="127" r="3.8"/><circle cx="597" cy="233" r="4.3"/><circle cx="605" cy="243" r="5.8"/><circle cx="594" cy="250" r="5.3"/><circle cx="609" cy="367" r="4.3"/><circle cx="662" cy="405" r="4.8"/><circle cx="746" cy="490" r="5.3"/><circle cx="736" cy="505" r="5.8"/><circle cx="739" cy="518" r="4.8"/><circle cx="839" cy="133" r="4.3"/><circle cx="892" cy="165" r="4.8"/><circle cx="960" cy="92" r="5.3"/><circle cx="996" cy="76" r="4.8"/><circle cx="1003" cy="110" r="4.8"/><circle cx="1005" cy="122" r="4.3"/><circle cx="1016" cy="131" r="4.3"/><circle cx="1054" cy="369" r="6.3"/><circle cx="1078" cy="357" r="7.3"/><circle cx="1067" cy="351" r="4.8"/><circle cx="1085" cy="351" r="5.3"/><circle cx="1067" cy="376" r="4.6"/><circle cx="1076" cy="376" r="5.3"/><circle cx="1078" cy="383" r="4.6"/><circle cx="1068" cy="387" r="4.3"/><circle cx="1061" cy="394" r="4.3"/><circle cx="1048" cy="362" r="4.8"/><circle cx="1071" cy="365" r="4.8"/><circle cx="1143" cy="366" r="4.8"/><circle cx="1071" cy="123" r="5.3"/><circle cx="1093" cy="118" r="5.8"/><circle cx="1195" cy="62" r="4.8"/><circle cx="1177" cy="380" r="4.8"/><circle cx="1190" cy="388" r="4.8"/><circle cx="1199" cy="407" r="4.3"/><circle cx="1130" cy="452" r="5.8"/><circle cx="1126" cy="460" r="4.8"/><circle cx="1110" cy="470" r="4.8"/><circle cx="1123" cy="487" r="4.8"/><circle cx="1055" cy="400" r="4.3"/><circle cx="1200" cy="330" r="4.3"/><circle cx="1228" cy="418" r="4.3"/><circle cx="1218" cy="440" r="4.3"/><circle cx="1211" cy="464" r="4.3"/><circle cx="1214" cy="486" r="4.3"/><circle cx="1192" cy="510" r="4.8"/><circle cx="1210" cy="530" r="4.8"/><circle cx="1226" cy="528" r="4.8"/><circle cx="1215" cy="560" r="4.8"/><circle cx="990" cy="455" r="5.8"/><circle cx="1000" cy="468" r="5.8"/><circle cx="985" cy="478" r="5.3"/><circle cx="1010" cy="480" r="5.8"/><circle cx="1015" cy="495" r="5.3"/><circle cx="975" cy="490" r="4.8"/><circle cx="995" cy="500" r="5.8"/><circle cx="1008" cy="515" r="5.3"/><circle cx="985" cy="520" r="5.8"/><circle cx="970" cy="540" r="5.3"/><circle cx="1000" cy="540" r="4.8"/><circle cx="1025" cy="510" r="4.8"/><circle cx="1015" cy="545" r="4.8"/><circle cx="1040" cy="530" r="4.8"/><circle cx="1030" cy="470" r="4.8"/></g>
<path d="M611,252 L737,157 L734,138 L747,130 L760,146 L780,171 L795,183 L803,200 L814,220 L821,250 L823,278 L835,296 L837,324 L851,335 L862,358 L869,368 L877,380 L887,395 L905,402 L922,405 L940,420 L955,432 L975,440 L995,436 L1000,446 L960,444 L935,450 L910,457 L900,442 L895,428 L872,422 L865,407 L840,402 L810,377 L800,362 L780,345 L752,332 L732,319 L733,306 L721,300 L718,286 L708,279 L699,269 L685,273 L671,268 L655,270.6 L630,262 Z" fill="#e882b4" fill-opacity="0.4"/>
<path d="M737,156 L734,138 L747,130 L760,146 L780,171 L795,183 L803,200 L814,220 L821,250 L823,278 L835,296 L837,324 L851,335 L862,358 L869,368 L877,380 L887,395 L905,402 L922,405 L940,420 L955,432 L975,440 L950,432 L905,405 L869,377 L762,250 L787,227 L785,212 L777,186 L751,162 Z" fill="#f5c858"/>
<path d="M1210,411 L1224,406 L1260,419 L1295,370 L1375,350 L1410,297 L1438,287 L1438,290 L1415,302 L1395,330 L1370,356 L1330,367 L1300,372 L1290,395 L1287,435 L1262,424 L1235,421 Z" fill="#f3e865"/>
<path d="M832,180 L857,196 L900,226 L940,244 L965,282 L966,355 L1000,388 L1000,440 L995,436 L996,428 L985,405 L972,385 L960,362 L955,337 L957,310 L952,280 L935,255 L915,240 L897,227 L857,197 L827,182 Z" fill="#f3e865"/>
<path d="M1041,105 L1060,96 L1076,89 L1092,74 L1096,74 L1078,93 L1062,100 L1043,109 Z" fill="#f3e865"/>
<path d="M1009,121 L1012,114 L1018,112 L1016,123 Z" fill="#f3e865"/>
<path d="M925,60 L930,72 L944,80 L958,72 L965,60 Z" fill="#f3e865"/>
<g fill="#c9c27b"><path d="M602,252 L605,280 L617,297 L642,317 L662,335 L675,340 L690,360 L702,372 L710,395 L722,400 L751,422 L761,449 L768,480 L786,493 L800,505 L820,536 L834,566 L842,590 L850,640 L960,640 L965,590 L958,545 L966,505 L985,494 L1000,480 L1006,462 L1000,447 L995,437 L960,444 L935,450 L910,457 L900,442 L895,428 L872,422 L865,407 L840,402 L810,377 L800,362 L780,345 L752,332 L732,319 L733,306 L721,300 L718,286 L708,279 L699,269 L685,273 L671,268 L655,270.6 L630,262 L611,252 Z"/><path d="M737,50 L737,71 L733,100 L731,121 L734,138 L747,130 L760,146 L780,171 L795,183 L803,200 L814,220 L821,250 L823,278 L835,296 L837,324 L851,335 L862,358 L869,368 L877,380 L887,395 L905,402 L922,405 L940,420 L955,432 L975,440 L995,436 L996,428 L985,405 L972,385 L960,362 L955,337 L957,310 L952,280 L935,255 L915,240 L897,227 L857,197 L832,182 L827,166 L820,125 L804,98 L806,71 L806,50 Z"/><path d="M1016,50 L1016,71 L1012,107 L1009,121 L1016,125 L1023,125 L1032,118 L1041,107 L1060,98 L1076,91 L1094,76 L1100,50 Z"/><path d="M1192,465 L1197,430 L1210,411 L1224,407 L1235,421 L1262,424 L1287,435 L1290,395 L1300,372 L1330,367 L1370,356 L1395,330 L1415,302 L1438,294 L1500,260 L1500,700 L1243,700 L1243,588 L1235,549 L1206,500 Z"/><path d="M1032,575 L1050,560 L1071,572 L1075,600 L1035,600 Z"/><path d="M622,370 L632,372 L645,382 L657,391 L655,396 L640,392 L626,382 Z"/><path d="M681,393 L692,390 L700,398 L699,410 L688,408 Z"/><path d="M683,431 L695,434 L712,452 L717,470 L710,473 L700,461 L686,446 Z"/><path d="M744,541 L756,545 L776,570 L772,576 L760,568 L748,552 Z"/><path d="M1155,315 L1165,312 L1172,325 L1168,340 L1158,338 Z"/><path d="M868,405 L880,404 L885,415 L875,423 L867,417 Z"/><path d="M895,428 L910,430 L915,448 L908,452 L898,445 Z"/></g>
<path d="M495,95.2 L498.6,97 L501.3,110.5 L509.3,126.6 L531.7,123 L533.5,130.2 L530.9,139.2 L533.5,150 L527.3,160.7 L538.9,175 L547.9,187.6 L547.9,198.4 L542.5,205.6 L535.3,196.6 L531.7,180.4 L506.6,137.4 L492.3,101.5 Z" fill="#f3e865"/>
<path d="M770 72 L772 84 L778 91 L786 95 L792 92 L798 96 L806 97 L808 72 Z M735 72 L742 72 L740 100 L737 125 L734 138 L732 121 Z M717 72 L733 72 L732 80 L727 84 L720 83 Z" fill="#f3e865"/>
<path d="M536 178 L541 176 L546 188 L547 198 L542 204 L537 196 L534 184 Z M519 149 L523 147 L525 155 L520 155 Z M527 142 L531 141 L532 151 L527 150 Z M494 98 L498 98 L498 102 L494 102 Z" fill="#c9c27b"/>
<g fill="#c9c27b"><circle cx="1055" cy="370" r="2.3"/><circle cx="1077" cy="357" r="3"/><circle cx="1076" cy="376" r="1.2"/></g>
<g fill="#f3e865"><circle cx="715" cy="87" r="3"/><circle cx="605" cy="243" r="2.5"/><circle cx="960" cy="92" r="1.5"/></g>
<g fill="none" stroke="#a474f6" stroke-width="1.6" stroke-linejoin="round"><path d="M972 448 L962 458 L950 470 L938 482 L925 486"/><path d="M962 458 L975 466 L990 470"/><path d="M950 470 L958 484 L966 494"/><path d="M990 452 L1000 462"/></g>
<path d="M868,405 L880,404 L885,415 L875,423 L867,417 Z M895,428 L910,430 L915,448 L908,452 L898,445 Z" fill="#d8a878"/>
<path d="M745 372 L752 374 L766 388 L770 394 L760 395 L748 386 Z" fill="#eef8fe"/>
<path d="M1328 456 L1334 453 L1336 458 L1330 460 Z" fill="#f4f4f4"/>
<path d="M611,252 L737,157" fill="none" stroke="#f01a1a" stroke-width="1.4"/>
<path d="M736.6,157.1 L737.5,154.8 L736.4,152.8 L735.0,150.8 L734.7,148.7 L734.4,146.6 L734.8,144.4 L733.8,142.4 L734.6,140.1 L734.1,138.1 L737.2,139.1 L738.1,136.4 L739.2,133.9 L741.2,133.1 L742.9,131.7 L745.3,131.4 L746.8,130.2 L749.1,131.0 L749.3,133.5 L751.2,134.5 L752.3,136.3 L753.0,138.4 L755.2,139.2 L756.1,141.2 L757.0,143.1 L757.9,145.1 L760.1,145.9 L761.8,147.1 L763.3,148.5 L763.3,151.1 L764.4,152.8 L765.9,154.1 L767.4,155.5 L768.2,157.4 L770.0,158.5 L772.0,159.5 L772.2,161.8 L773.2,163.6 L775.2,164.6 L777.1,165.7 L778.1,167.4 L779.5,168.8 L780.5,170.4 L781.8,172.1 L783.9,172.9 L784.9,175.1 L786.2,176.9 L788.6,177.3 L790.2,178.8 L791.0,181.1 L793.8,181.1 L795.5,182.8 L795.7,185.0 L797.8,186.3 L797.9,188.5 L797.7,191.0 L799.4,192.5 L799.5,194.7 L800.4,196.6 L801.4,198.5 L803.2,199.9 L804.8,201.4 L807.1,202.5 L806.6,205.1 L807.8,206.8 L809.0,208.6 L809.8,210.5 L810.9,212.2 L810.8,214.7 L812.5,216.1 L813.3,218.0 L813.3,220.2 L814.5,222.0 L815.8,223.8 L815.7,225.9 L815.2,228.2 L817.4,229.8 L816.7,232.0 L817.0,234.1 L817.7,236.0 L817.4,238.2 L819.2,239.9 L819.8,241.8 L819.5,244.0 L820.4,245.9 L819.9,248.2 L820.2,250.1 L820.4,252.0 L821.9,254.0 L822.2,255.9 L822.6,257.9 L822.2,260.0 L820.9,262.1 L821.0,264.1 L821.1,266.1 L822.9,268.0 L823.1,270.0 L822.3,272.0 L822.0,274.1 L822.5,276.0 L823.8,277.5 L823.4,280.3 L824.9,281.9 L827.2,283.0 L828.1,285.0 L828.1,287.6 L830.4,288.7 L831.0,290.9 L833.3,291.9 L833.1,294.7 L835.8,295.9 L834.1,298.1 L835.6,300.0 L837.5,301.9 L834.5,304.1 L835.7,306.0 L836.0,308.0 L835.3,310.1 L836.7,312.0 L836.9,314.0 L837.0,316.0 L837.4,317.9 L837.0,320.0 L836.7,322.0 L837.1,323.9 L838.7,325.4 L840.4,326.9 L842.3,328.0 L844.7,328.6 L846.2,330.3 L847.2,332.6 L849.5,333.3 L850.9,335.1 L852.7,336.5 L853.3,338.6 L853.2,341.0 L854.5,342.7 L854.8,345.0 L856.3,346.6 L857.4,348.4 L858.4,350.3 L859.3,352.2 L859.8,354.4 L860.2,356.5 L861.9,358.1 L862.6,360.1 L865.0,360.9 L866.3,362.5 L867.4,364.1 L867.3,366.7 L869.6,367.6 L869.8,369.9 L870.6,371.9 L872.9,372.8 L873.8,374.7 L873.8,377.2 L876.5,377.9 L877.0,380.0 L878.7,381.3 L878.2,384.0 L880.2,385.1 L882.3,386.1 L882.3,388.5 L884.5,389.5 L884.2,392.0 L886.6,392.9 L887.4,394.1 L889.2,395.3 L891.1,396.4 L892.7,398.0 L895.3,397.4 L896.9,399.0 L899.8,397.6 L900.8,400.8 L903.3,400.3 L904.9,402.3 L907.3,401.5 L909.4,401.8 L911.4,403.0 L913.5,403.6 L915.7,403.4 L917.7,404.3 L920.0,403.8 L922.6,404.2 L923.9,406.0 L924.9,408.2 L926.9,409.1 L929.1,409.8 L931.1,410.8 L931.5,413.6 L933.9,414.0 L934.5,416.6 L936.3,417.8 L938.4,418.6 L940.1,419.8 L941.4,421.7 L943.5,422.4 L944.7,424.4 L946.8,425.2 L948.9,425.9 L950.6,427.3 L952.0,428.9 L953.9,430.0 L954.7,432.8 L957.2,432.4 L959.2,433.2 L961.3,433.7 L963.2,434.7 L964.6,437.0 L967.2,436.3 L969.2,437.2 L971.4,437.4 L973.0,439.1 L974.9,439.4 L976.8,438.5 L978.8,438.3 L980.5,436.3 L982.9,438.0 L985.0,438.2 L987.1,438.1 L989.1,437.7 L991.0,436.6 L993.2,437.4 L994.6,436.2 L996.9,437.6 L996.2,440.4 L997.5,442.2 L999.7,443.6 L1000.0,446.0 L998.0,445.2 L996.0,445.6 L994.0,445.3 L991.9,447.1 L990.0,446.3 L988.0,446.3 L986.0,445.2 L984.0,444.9 L982.0,445.2 L980.0,444.3 L978.0,444.9 L976.0,443.9 L974.0,444.2 L972.0,445.5 L970.0,444.0 L968.0,443.9 L966.0,444.3 L964.0,444.2 L962.0,443.5 L959.8,443.2 L958.1,445.3 L955.7,444.5 L953.7,445.1 L951.9,446.9 L949.5,446.1 L947.4,446.6 L945.4,447.5 L943.4,448.1 L941.0,447.7 L938.9,448.0 L937.3,450.5 L934.8,449.3 L932.9,450.7 L931.0,451.8 L928.9,452.4 L926.9,453.1 L924.3,452.0 L922.3,452.8 L920.2,453.3 L918.5,455.2 L916.3,455.3 L914.5,456.9 L912.1,456.5 L909.3,457.4 L908.6,455.6 L906.9,454.3 L907.3,451.6 L906.3,449.8 L905.2,448.2 L903.1,447.2 L903.1,444.7 L900.9,443.8 L898.8,442.4 L898.5,440.3 L898.1,438.2 L897.3,436.2 L897.2,434.0 L896.2,432.1 L896.5,429.7 L895.1,427.7 L893.2,426.5 L891.1,425.7 L888.9,425.9 L886.8,425.3 L884.2,426.4 L882.7,423.8 L880.3,424.2 L878.2,424.1 L876.4,422.1 L874.2,422.2 L872.1,421.9 L870.5,420.4 L869.7,418.5 L869.4,416.4 L869.3,414.1 L867.5,412.7 L866.1,411.0 L865.6,409.0 L864.9,407.6 L862.9,406.4 L860.9,405.6 L858.7,405.9 L856.6,405.6 L854.4,405.9 L852.7,403.5 L850.4,404.1 L848.5,402.9 L846.2,403.7 L844.1,403.0 L842.3,401.4 L841.3,400.4 L837.8,401.5 L837.4,398.7 L835.6,397.7 L833.5,396.9 L832.6,394.9 L831.2,393.3 L828.4,393.5 L827.4,391.4 L826.4,389.4 L824.4,388.6 L822.6,387.6 L820.4,387.0 L819.1,385.3 L818.1,383.3 L815.8,382.9 L814.9,380.7 L811.8,381.3 L811.6,378.3 L809.8,377.1 L809.4,375.0 L807.4,373.9 L807.5,371.4 L806.3,369.9 L804.0,369.0 L804.2,366.4 L801.3,365.9 L801.1,363.7 L799.9,362.1 L798.7,360.4 L795.9,360.5 L795.2,358.3 L794.1,356.5 L792.7,355.0 L790.8,354.1 L789.9,352.1 L788.1,351.0 L785.8,350.7 L784.3,349.3 L783.1,347.6 L781.1,346.8 L780.2,344.7 L777.8,344.8 L776.0,343.8 L773.6,344.2 L772.1,342.4 L771.0,339.9 L769.0,339.3 L767.3,338.1 L764.8,338.7 L763.8,336.0 L761.5,336.0 L759.3,335.7 L756.8,336.2 L755.5,334.2 L754.3,332.0 L752.6,331.1 L750.0,331.1 L748.7,329.0 L746.0,329.3 L744.6,327.5 L742.5,326.7 L742.3,323.1 L739.2,323.9 L738.3,321.3 L734.2,323.5 L734.3,319.4 L732.5,319.0 L731.8,316.8 L733.3,314.7 L732.0,312.5 L732.3,310.3 L731.7,308.1 L733.4,305.2 L732.1,302.8 L728.7,304.5 L727.4,302.1 L724.9,302.2 L722.9,301.1 L721.9,299.8 L721.2,297.9 L720.8,295.9 L719.9,294.0 L718.9,292.1 L720.4,289.7 L717.8,288.1 L717.2,287.1 L715.7,285.7 L714.4,284.0 L713.5,281.8 L711.0,281.8 L709.2,280.9 L708.3,278.7 L706.1,277.7 L705.2,275.5 L703.9,273.6 L702.3,272.1 L701.1,270.2 L699.0,268.9 L696.9,269.1 L695.2,270.7 L693.2,271.4 L691.0,271.1 L689.1,272.1 L687.0,272.4 L685.2,272.4 L683.4,271.3 L681.0,271.6 L679.3,270.2 L676.7,271.1 L674.7,270.2 L673.3,267.7 L670.8,267.1 L668.9,267.5 L667.1,269.2 L664.8,268.0 L663.0,269.1 L661.1,270.2 L659.1,270.7 L657.1,270.8 L655.1,270.3 L652.7,271.0 L651.3,268.9 L649.1,269.0 L647.5,267.3 L645.1,268.2 L643.4,266.8 L641.6,265.7 L639.4,266.0 L637.6,264.8 L635.6,264.4 L633.7,263.7 L631.8,263.0 L630.4,261.3 L628.0,261.3 L626.4,259.6 L623.8,260.0 L622.3,258.1 L620.4,257.2 L618.6,256.1 L616.2,255.9 L614.9,253.7 L612.5,253.8 L611,252" fill="none" stroke="#f01a1a" stroke-width="2.2" stroke-linejoin="round"/>
<path d="M840.3,400.8 L841.8,402.4 L842.0,404.7 L843.9,406.0 L843.3,408.7 L845.7,409.8 L844.9,412.4 L846.9,414.0 L846.6,416.4 L847.5,418.4 L848.6,420.3 L849.5,422.3 L851.2,424.0 L850.5,426.1 L852.4,427.9 L852.0,430.0 L853.3,431.8 L852.1,434.1 L853,436" fill="none" stroke="#f01a1a" stroke-width="1.6"/>
<path d="M804.1,365.5 L802.3,368.6 L803.9,370.3 L805.3,372.1 L806.0,374.1 L807.4,375.9 L808.2,377.9 L808.9,379.9 L810.8,381.5 L810.4,384.0 L810.6,386.3 L812.1,387.9 L813.4,389.6 L815.4,390.7 L816,393" fill="none" stroke="#f01a1a" stroke-width="1.6"/>
<path d="M868.9,345.6 L868.7,348.0 L869.3,350.1 L869.9,352.2 L871.1,354.0 L872.0,356.0 L870.5,357.7 L870.2,359.8 L870.0,361.9 L870.7,364.2 L869.5,366.0 L869,368" fill="none" stroke="#f01a1a" stroke-width="1.4"/>
<g fill="none" stroke="#f01a1a" stroke-width="1.3"><circle cx="966" cy="287" r="2"/><circle cx="985" cy="373" r="3"/><circle cx="976" cy="380" r="2"/><circle cx="984" cy="398" r="3"/></g>
<g fill="#f01a1a"><circle cx="926" cy="240" r="1.5"/><circle cx="938" cy="246" r="2"/><circle cx="943" cy="252" r="1.8"/><circle cx="1002" cy="387" r="1.5"/><circle cx="1003" cy="246" r="0"/></g>
<path d="M1010 430 L1026 415 L1025 399 L1075 436 L1147 352 L1185 324 A17 17 0 0 1 1206 345 L1172 380 L1100 464 L1113 495 L1182 566 L1227 586 L1240 600 L1150 600 L1082 513 L1063 472 Z" fill="#e882b4" fill-opacity="0.45" stroke="#ee1c2a" stroke-width="1.5" stroke-linejoin="round"/>
<path d="M771 485 L782 486 L798 496 L799 502 L790 503 L775 492 Z" fill="#e882b4" fill-opacity="0.5" stroke="#c0203a" stroke-width="1.2"/>
<g stroke="#8e8e9e" stroke-width="1"><line x1="592.5" y1="72" x2="592.5" y2="588"/><line x1="807.5" y1="72" x2="807.5" y2="588"/><line x1="1023.5" y1="72" x2="1023.5" y2="588"/><line x1="1238.5" y1="72" x2="1238.5" y2="588"/><line x1="388" y1="280.5" x2="1438" y2="280.5"/></g>
<g font-family="Liberation Sans" font-size="7" fill="#222"><text x="594" y="84">95 E</text><text x="809" y="84">100 E</text><text x="1025" y="84">105 E</text><text x="1240" y="84">110 E</text><text x="389" y="293">5 N</text></g>
<path d="M712 72 L732 172 L760 220 L807 308 L837 349 L869 377 L905 405 L950 432 L975 442" stroke="#f08a40" stroke-width="1.1" fill="none"/>
<g fill="none" stroke="#f08a50" stroke-width="0.8" opacity="0.9"><circle cx="712" cy="87" r="8"/><circle cx="733" cy="172" r="8"/><circle cx="837" cy="345" r="7"/><circle cx="842" cy="355" r="7"/><circle cx="850" cy="368" r="7"/><circle cx="858" cy="378" r="7"/><circle cx="866" cy="383" r="7"/><circle cx="874" cy="390" r="7"/><circle cx="898" cy="408" r="7"/><circle cx="905" cy="412" r="7"/><circle cx="928" cy="426" r="7"/><circle cx="940" cy="435" r="7"/><circle cx="950" cy="437" r="7"/><circle cx="960" cy="440" r="7"/></g>
<circle cx="975" cy="442" r="8" fill="#f5a060" fill-opacity="0.7" stroke="#f08a40"/>
<g fill="none" stroke="#1f6fa8" stroke-width="1.8"><path d="M792 220 L798 215 L806 220 L806 231 L792 231 Z"/><path d="M818 259 L824 262 L820 266 L826 269"/><path d="M860 358 L866 368 L862 372"/><path d="M900 402 L906 405 L912 408"/><path d="M968 437 L975 434 L984 437"/></g>
<circle cx="738" cy="156" r="2" fill="#1f6fa8"/>
</svg>
<svg style="left:410px;top:78px" width="30" height="50"><path d="M14.6 4 L20 15.8 L9.2 15.8 Z" fill="#f39040"/><path d="M14.6 15 V45.5" stroke="#f39040" stroke-width="1.4"/><path d="M10 32 V22.5 L19.5 32 V22.5" fill="none" stroke="#f39040" stroke-width="1.6"/></svg>
<div class="a" style="left:1370px;top:80px;width:23px;height:22px;background:rgba(80,80,84,0.76);border-radius:2.5px;color:#fff;font-weight:bold;font-size:8px;display:flex;align-items:center;justify-content:center">N</div>
<div class="a" style="left:1348px;top:104px;width:21px;height:22px;background:rgba(80,80,84,0.76);border-radius:2.5px;color:#fff;font-weight:bold;font-size:8px;display:flex;align-items:center;justify-content:center">W</div>
<div class="a" style="left:1370px;top:104px;width:23px;height:22px;background:rgba(80,80,84,0.76);border-radius:2.5px;color:#fff;font-weight:bold;font-size:8px;display:flex;align-items:center;justify-content:center"><svg width="12" height="12"><circle cx="6" cy="6" r="3.5" fill="none" stroke="#fff" stroke-width="1"/><path d="M6 0.5 V3 M6 9 V11.5 M0.5 6 H3 M9 6 H11.5" stroke="#fff" stroke-width="1"/></svg></div>
<div class="a" style="left:1394px;top:104px;width:22px;height:22px;background:rgba(80,80,84,0.76);border-radius:2.5px;color:#fff;font-weight:bold;font-size:8px;display:flex;align-items:center;justify-content:center">E</div>
<div class="a" style="left:1370px;top:127px;width:23px;height:22px;background:rgba(80,80,84,0.76);border-radius:2.5px;color:#fff;font-weight:bold;font-size:8px;display:flex;align-items:center;justify-content:center">S</div>
<div class="a" style="left:1370px;top:170px;width:22px;height:22px;background:rgba(80,80,84,0.76);border-radius:2.5px;color:#fff;font-weight:bold;font-size:7px;display:flex;align-items:center;justify-content:center">+</div>
<div class="a" style="left:1370px;top:260px;width:22px;height:22px;background:rgba(80,80,84,0.76);border-radius:2.5px;color:#fff;font-weight:bold;font-size:7px;display:flex;align-items:center;justify-content:center">-</div>
<div class="a" style="left:1370px;top:194px;width:22px;height:64px;background:rgba(80,80,84,0.76)"></div>
<div class="a" style="left:1378.5px;top:196px;width:3px;height:60px;background:#a8b0b0"></div>
<div class="a" style="left:1388.5px;top:196px;width:1.5px;height:60px;background:repeating-linear-gradient(180deg,#cfcfcf 0 1px,transparent 1px 3px)"></div>
<div class="a" style="left:1374px;top:238px;width:12px;height:5.5px;background:#f0f0f0;border-radius:1px"></div>
<div class="a" style="left:1370px;top:304px;width:22px;height:22px;background:rgba(80,80,84,0.76);border-radius:2.5px;color:#fff;font-weight:bold;font-size:8px;display:flex;align-items:center;justify-content:center"><svg width="14" height="14"><path d="M2 11 L11 3" stroke="#fff" stroke-width="3"/><path d="M4 9.5 L5 10.5 M6 7.5 L7 8.5 M8 5.5 L9 6.5" stroke="#555" stroke-width="0.8"/></svg></div>
<div class="a" style="left:388px;top:492px;width:1050px;height:96px;background:rgba(26,26,20,0.57)"></div>
<div class="a" style="left:388px;top:492px;width:1050px;height:1px;background:rgba(255,255,255,0.22);height:2px"></div>
<div class="t" style="left:389px;top:499.11px;font-size:6px;color:#222;">0</div>
<div class="a" style="left:398.5px;top:503.1px;width:12.4px;height:12.4px;border-radius:50%;background:#f0d010"></div>
<div class="t" style="left:420.7px;top:503.96px;font-size:9px;color:#f0f0f0;">0 nm</div>
<div class="a" style="left:462.8px;top:503.1px;width:12.4px;height:12.4px;border-radius:50%;background:#9a60f0"></div>
<div class="t" style="left:484.7px;top:503.96px;font-size:9px;color:#f0f0f0;">4 nm</div>
<div class="a" style="left:526.0999999999999px;top:503.1px;width:12.4px;height:12.4px;border-radius:50%;background:#a56ef4"></div>
<div class="t" style="left:548.7px;top:503.96px;font-size:9px;color:#f0f0f0;">6 nm</div>
<div class="a" style="left:590.0999999999999px;top:503.1px;width:12.4px;height:12.4px;border-radius:50%;background:#b88cf6"></div>
<div class="t" style="left:612.3px;top:503.96px;font-size:9px;color:#f0f0f0;">12 nm</div>
<div class="a" style="left:654.0999999999999px;top:503.1px;width:12.4px;height:12.4px;border-radius:50%;background:#c8acfa"></div>
<div class="t" style="left:675.7px;top:503.96px;font-size:9px;color:#f0f0f0;">25 nm</div>
<div class="a" style="left:717.8px;top:503.1px;width:12.4px;height:12.4px;border-radius:50%;background:#d8ccfc"></div>
<div class="t" style="left:739.7px;top:503.96px;font-size:9px;color:#f0f0f0;">50 nm</div>
<div class="a" style="left:781.0999999999999px;top:503.1px;width:12.4px;height:12.4px;border-radius:50%;background:#e2def8"></div>
<div class="t" style="left:803px;top:503.96px;font-size:9px;color:#f0f0f0;">200 nm</div>
<svg style="left:841.3px;top:506px" width="9" height="6"><path d="M1 5 L4.5 1.5 L8 5" fill="none" stroke="#e8e8e8" stroke-width="1.2"/></svg>
<div class="t" style="left:400.7px;top:533.96px;font-size:9px;color:#f0f0f0;">All Areas</div>
<div class="a" style="left:443px;top:532px;width:34px;height:15px;border-radius:8px;background:#5fa05f"></div>
<div class="a" style="left:464.2px;top:534.2px;width:10.6px;height:10.6px;border-radius:50%;background:#050505"></div>
<div class="a" style="left:484.5px;top:533.3px;width:12.4px;height:12.4px;border-radius:50%;background:#f09030"></div>
<div class="t" style="left:501.3px;top:533.96px;font-size:9px;color:#f0f0f0;">ECA</div>
<svg style="left:531.3px;top:536px" width="9" height="6"><path d="M1 5 L4.5 1.5 L8 5" fill="none" stroke="#e8e8e8" stroke-width="1.2"/></svg>
<div class="a" style="left:548.5px;top:533.3px;width:12.4px;height:12.4px;border-radius:50%;background:#1e6a1e"></div>
<div class="t" style="left:565.3px;top:533.96px;font-size:9px;color:#f0f0f0;">SA</div>
<svg style="left:595px;top:536px" width="9" height="6"><path d="M1 5 L4.5 1.5 L8 5" fill="none" stroke="#e8e8e8" stroke-width="1.2"/></svg>
<div class="a" style="left:611.8px;top:533.3px;width:12.4px;height:12.4px;border-radius:50%;background:#22c022"></div>
<div class="t" style="left:628.7px;top:533.96px;font-size:9px;color:#f0f0f0;">PSSA</div>
<svg style="left:659px;top:536px" width="9" height="6"><path d="M1 5 L4.5 1.5 L8 5" fill="none" stroke="#e8e8e8" stroke-width="1.2"/></svg>
<div class="a" style="left:675.8px;top:533.3px;width:12.4px;height:12.4px;border-radius:50%;background:#22c0d0"></div>
<div class="t" style="left:692.7px;top:533.96px;font-size:9px;color:#f0f0f0;">Polar</div>
<svg style="left:722.3px;top:536px" width="9" height="6"><path d="M1 5 L4.5 1.5 L8 5" fill="none" stroke="#e8e8e8" stroke-width="1.2"/></svg>
<div class="a" style="left:739.5px;top:533.3px;width:12.4px;height:12.4px;border-radius:50%;background:#1050f0"></div>
<div class="t" style="left:756.3px;top:533.96px;font-size:9px;color:#f0f0f0;">Region</div>
<svg style="left:786.7px;top:536px" width="9" height="6"><path d="M1 5 L4.5 1.5 L8 5" fill="none" stroke="#e8e8e8" stroke-width="1.2"/></svg>
<div class="a" style="left:803.5px;top:533.3px;width:12.4px;height:12.4px;border-radius:50%;background:#f01818"></div>
<div class="t" style="left:820.3px;top:533.96px;font-size:9px;color:#f0f0f0;">Nat</div>
<svg style="left:850px;top:536px" width="9" height="6"><path d="M1 5 L4.5 1.5 L8 5" fill="none" stroke="#e8e8e8" stroke-width="1.2"/></svg>
<div class="a" style="left:867.5999999999999px;top:533.3px;width:12.4px;height:12.4px;border-radius:50%;background:#1a72b8"></div>
<div class="t" style="left:884px;top:533.96px;font-size:9px;color:#f0f0f0;">Port</div>
<svg style="left:914.4px;top:536px" width="9" height="6"><path d="M1 5 L4.5 1.5 L8 5" fill="none" stroke="#e8e8e8" stroke-width="1.2"/></svg>
<div class="a" style="left:930.8px;top:533.3px;width:12.4px;height:12.4px;border-radius:50%;background:#9a5a2a"></div>
<div class="t" style="left:947.6px;top:533.96px;font-size:9px;color:#f0f0f0;">BWEA</div>
<svg style="left:977.6px;top:536px" width="9" height="6"><path d="M1 5 L4.5 1.5 L8 5" fill="none" stroke="#e8e8e8" stroke-width="1.2"/></svg>
<div class="a" style="left:994.8px;top:533.3px;width:12.4px;height:12.4px;border-radius:50%;background:#e020e0"></div>
<div class="t" style="left:1011.9px;top:533.96px;font-size:9px;color:#f0f0f0;">Whale</div>
<svg style="left:1042px;top:536px" width="9" height="6"><path d="M1 5 L4.5 1.5 L8 5" fill="none" stroke="#e8e8e8" stroke-width="1.2"/></svg>
<div class="a" style="left:1058.6px;top:533.3px;width:12.4px;height:12.4px;border-radius:50%;background:#909090"></div>
<div class="t" style="left:1075.4px;top:533.96px;font-size:9px;color:#f0f0f0;">Co.</div>
<svg style="left:1106px;top:536px" width="9" height="6"><path d="M1 5 L4.5 1.5 L8 5" fill="none" stroke="#e8e8e8" stroke-width="1.2"/></svg>
<svg style="left:392px;top:560px" width="17" height="17"><circle cx="8.3" cy="8.5" r="7.6" fill="#f4f4f4"/><rect x="7.3" y="7" width="2" height="5.5" fill="#222"/><circle cx="8.3" cy="4.8" r="1.1" fill="#222"/></svg>
<div class="t" style="left:412px;top:557.16px;font-size:8.8px;color:#f4f4f4;">03° 44.228' N, 102° 51.086' E | Roaming | Standard Display + Other (filtered)</div>
<div class="t" style="left:414.7px;top:569.16px;font-size:8.8px;color:#f4f4f4;">Compilation Scale: 1:1 &nbsp;| Display Scale: 1:7,000,000 &nbsp;| Overscale: N/A</div>
<div class="t" style="left:1239.8px;top:563.66px;font-size:9px;color:#f4f4f4;">Display</div>
<svg style="left:1271.6px;top:566px" width="9" height="6"><path d="M1 5 L4.5 1.5 L8 5" fill="none" stroke="#e8e8e8" stroke-width="1.2"/></svg>
<div class="t" style="left:1289px;top:563.65px;font-size:8.5px;color:#c8c8c8;text-decoration:line-through">ENC</div>
<div class="t" style="left:1315px;top:563.65px;font-size:8.5px;color:#8a8a8a;">AIO</div>
<svg style="left:1336px;top:560px" width="100" height="18">
<g fill="#b8b8b8"><ellipse cx="9.5" cy="5.5" rx="3.8" ry="3.6"/><rect x="7" y="7" width="5" height="3.5" rx="1"/></g>
<g stroke="#b8b8b8" stroke-width="1.5" stroke-linecap="round"><path d="M4 10.5 L15 15.5 M15 10.5 L4 15.5"/></g>
<path d="M28 2.5 L34.5 15 H21.5 Z" fill="none" stroke="#c8c8c8" stroke-width="1.3"/><rect x="27.4" y="6.5" width="1.2" height="4.5" fill="#c8c8c8"/><rect x="27.4" y="12" width="1.2" height="1.2" fill="#c8c8c8"/>
<g fill="none" stroke="#c0c0c0" stroke-width="1.3" stroke-linecap="round"><circle cx="47" cy="3.5" r="1.5"/><path d="M47 5 V15.5 M44.5 7.5 H49.5 M42 11.5 Q43 15.5 47 15.6 Q51 15.5 52 11.5"/></g>
<g fill="none" stroke="#c0c0c0" stroke-width="1.1"><path d="M66 11 A3 3 0 0 1 68.5 5 A3.5 3.5 0 0 1 74.5 7 A2 2 0 0 1 75 11 Z"/><circle cx="64" cy="6.5" r="2.5"/></g>
<g fill="#c0c0c0"><rect x="64" y="13.5" width="1" height="1.6"/><rect x="67" y="13.5" width="1" height="1.6"/><rect x="70" y="13.5" width="1" height="1.6"/></g>
<rect x="80" y="2" width="14" height="13" fill="#f4f4f4"/><text x="87" y="12" font-family="Liberation Sans" font-weight="bold" font-size="7" text-anchor="middle" fill="#333" textLength="10" lengthAdjust="spacingAndGlyphs">EM</text>
</svg>
<div class="a" style="left:388px;top:54px;width:62px;height:18px;border:1px solid #4a4a4a;border-bottom:none;background:#252525"></div>
<div class="t" style="left:397px;top:57.66px;font-size:9px;color:#ececec;">Chart View</div>
<div class="a" style="left:450px;top:71px;width:988px;height:1px;background:#3a3a3a"></div>
<svg style="left:1428px;top:61px" width="9" height="5"><path d="M0.5 0.5 H7.5 L4 4 Z" fill="#6a6a6a"/></svg>
<div class="a" style="left:388px;top:588px;width:1050px;height:3px;background:#1e1e1e"></div><div class="a" style="left:388px;top:591px;width:1050px;height:189px;background:#252525"></div>
<div class="a" style="left:389px;top:591px;width:162px;height:19px;border:1px solid #4a4a4a;border-bottom:none"></div>
<div class="t" style="left:397px;top:594.66px;font-size:9px;color:#ececec;">Draft Waypoints (SGSIN to MMRGN)</div>
<div class="a" style="left:550px;top:609px;width:888px;height:1px;background:#4b4b4b"></div>
<div class="a" style="left:388px;top:609px;width:1px;height:171px;background:#4b4b4b"></div>
<div class="a" style="left:1437px;top:609px;width:1px;height:171px;background:#4b4b4b"></div>
<div class="a" style="left:388px;top:778px;width:1050px;height:1px;background:#4b4b4b"></div>
<svg style="left:1428px;top:598px" width="9" height="5"><path d="M0.5 0.5 H7.5 L4 4 Z" fill="#6a6a6a"/></svg>
<div class="a" style="left:400.6px;top:676.5px;width:1030px;height:17.5px;background:#5a6978"></div>
<div class="a" style="left:400.6px;top:676.5px;width:61px;height:17.5px;background:#3b4651"></div>
<div class="a" style="left:389px;top:624.8px;width:1041.3px;height:1px;background:#4b4b4b"></div>
<div class="a" style="left:389px;top:676.3px;width:1041.3px;height:1px;background:#4b4b4b"></div>
<div class="a" style="left:389px;top:693.9px;width:1041.3px;height:1px;background:#4b4b4b"></div>
<div class="a" style="left:389px;top:711.3px;width:1041.3px;height:1px;background:#4b4b4b"></div>
<div class="a" style="left:389px;top:728.3px;width:1041.3px;height:1px;background:#4b4b4b"></div>
<div class="a" style="left:400.6px;top:610px;width:1px;height:15px;background:#4b4b4b"></div>
<div class="a" style="left:461.5px;top:610px;width:1px;height:15px;background:#4b4b4b"></div>
<div class="a" style="left:1333.3px;top:610px;width:1px;height:15px;background:#4b4b4b"></div>
<div class="a" style="left:1430.3px;top:610px;width:1px;height:15px;background:#4b4b4b"></div>
<div class="a" style="left:462.5px;top:610px;width:1px;height:15px;background:#4b4b4b"></div>
<div class="a" style="left:400.6px;top:625px;width:1px;height:103.5px;background:#4b4b4b"></div>
<div class="a" style="left:461.5px;top:625px;width:1px;height:103.5px;background:#4b4b4b"></div>
<div class="a" style="left:537px;top:625px;width:1px;height:103.5px;background:#4b4b4b"></div>
<div class="a" style="left:605.3px;top:625px;width:1px;height:103.5px;background:#4b4b4b"></div>
<div class="a" style="left:672.2px;top:625px;width:1px;height:103.5px;background:#4b4b4b"></div>
<div class="a" style="left:732.4px;top:625px;width:1px;height:103.5px;background:#4b4b4b"></div>
<div class="a" style="left:792.3px;top:625px;width:1px;height:103.5px;background:#4b4b4b"></div>
<div class="a" style="left:852.6px;top:625px;width:1px;height:103.5px;background:#4b4b4b"></div>
<div class="a" style="left:927.5px;top:625px;width:1px;height:103.5px;background:#4b4b4b"></div>
<div class="a" style="left:1002.7px;top:625px;width:1px;height:103.5px;background:#4b4b4b"></div>
<div class="a" style="left:1078.4px;top:625px;width:1px;height:103.5px;background:#4b4b4b"></div>
<div class="a" style="left:1153.2px;top:625px;width:1px;height:103.5px;background:#4b4b4b"></div>
<div class="a" style="left:1212.8px;top:625px;width:1px;height:103.5px;background:#4b4b4b"></div>
<div class="a" style="left:1273px;top:625px;width:1px;height:103.5px;background:#4b4b4b"></div>
<div class="a" style="left:1333.3px;top:625px;width:1px;height:103.5px;background:#4b4b4b"></div>
<div class="a" style="left:1393.2px;top:625px;width:1px;height:103.5px;background:#4b4b4b"></div>
<div class="a" style="left:1430.3px;top:625px;width:1px;height:103.5px;background:#4b4b4b"></div>
<div class="a" style="left:462.5px;top:625px;width:1px;height:103.5px;background:#4b4b4b"></div>
<div class="t" style="left:883px;top:612.06px;font-size:9px;color:#e8e8e8;">General</div>
<div class="t" style="left:403.8px;top:639.61px;font-size:9px;color:#e4e4e4;">Waypoint</div>
<div class="t" style="left:403.8px;top:651.71px;font-size:9px;color:#e4e4e4;">No.</div>
<div class="t" style="left:466px;top:645.66px;font-size:9px;color:#e4e4e4;">Name</div>
<div class="t" style="left:541px;top:645.66px;font-size:9px;color:#e4e4e4;">Latitude</div>
<div class="t" style="left:609.5px;top:645.66px;font-size:9px;color:#e4e4e4;">Longitude</div>
<div class="t" style="left:676.3px;top:645.66px;font-size:9px;color:#e4e4e4;">Bearing (º)</div>
<div class="t" style="left:736px;top:627.51px;font-size:9px;color:#e4e4e4;">Overall</div>
<div class="t" style="left:736px;top:639.61px;font-size:9px;color:#e4e4e4;">Distance</div>
<div class="t" style="left:736px;top:651.71px;font-size:9px;color:#e4e4e4;">Travelled</div>
<div class="t" style="left:736px;top:663.81px;font-size:9px;color:#e4e4e4;">(NM)</div>
<div class="t" style="left:796.5px;top:639.61px;font-size:9px;color:#e4e4e4;">Distance</div>
<div class="t" style="left:796.5px;top:651.71px;font-size:9px;color:#e4e4e4;">(NM)</div>
<div class="t" style="left:855.8px;top:634.96px;font-size:9px;color:#e4e4e4;">Arrival Time</div>
<div class="t" style="left:855.8px;top:647.06px;font-size:9px;color:#e4e4e4;">(UTC)</div>
<div class="t" style="left:855.8px;top:657.41px;font-size:6px;color:#d8d8d8;">DD-MM-YYYY</div>
<div class="t" style="left:931.5px;top:634.96px;font-size:9px;color:#e4e4e4;">Arrival Time</div>
<div class="t" style="left:931.5px;top:647.06px;font-size:9px;color:#e4e4e4;">(Local)</div>
<div class="t" style="left:931.5px;top:657.41px;font-size:6px;color:#d8d8d8;">DD-MM-YYYY</div>
<div class="t" style="left:1006.4px;top:634.96px;font-size:9px;color:#e4e4e4;">Demanded Time</div>
<div class="t" style="left:1006.4px;top:647.06px;font-size:9px;color:#e4e4e4;">(Local)</div>
<div class="t" style="left:1006.4px;top:657.41px;font-size:6px;color:#d8d8d8;">DD-MM-YYYY</div>
<div class="t" style="left:1081.3px;top:645.66px;font-size:9px;color:#e4e4e4;">UTC Offset (+/-)</div>
<div class="t" style="left:1156.2px;top:627.51px;font-size:9px;color:#e4e4e4;">Overall</div>
<div class="t" style="left:1156.2px;top:639.61px;font-size:9px;color:#e4e4e4;">Distance</div>
<div class="t" style="left:1156.2px;top:651.71px;font-size:9px;color:#e4e4e4;">Remaining</div>
<div class="t" style="left:1156.2px;top:663.81px;font-size:9px;color:#e4e4e4;">(NM)</div>
<div class="t" style="left:1216.4px;top:639.61px;font-size:9px;color:#e4e4e4;">Turn Radius</div>
<div class="t" style="left:1216.4px;top:651.71px;font-size:9px;color:#e4e4e4;">(NM)</div>
<div class="t" style="left:1276.3px;top:639.61px;font-size:9px;color:#e4e4e4;">Rate Of Turn</div>
<div class="t" style="left:1276.3px;top:651.71px;font-size:9px;color:#e4e4e4;">(º/min)</div>
<div class="t" style="left:1336.6px;top:645.66px;font-size:9px;color:#e4e4e4;">Speed (kts)</div>
<div class="t" style="left:1396.1px;top:639.61px;font-size:9px;color:#e4e4e4;">Type (GC</div>
<div class="t" style="left:1396.1px;top:651.71px;font-size:9px;color:#e4e4e4;">\RL)</div>
<div class="t" style="right:982.0px;top:679.96px;font-size:9px;color:#f0f0f0;">1</div>
<div class="t" style="left:465.5px;top:679.96px;font-size:9px;color:#f0f0f0;">WP 1</div>
<div class="t" style="right:838.2px;top:679.96px;font-size:9px;color:#f0f0f0;">01° 16.067' N</div>
<div class="t" style="right:771.3px;top:679.96px;font-size:9px;color:#f0f0f0;">103° 50.150' E</div>
<div class="t" style="right:711.1px;top:679.96px;font-size:9px;color:#f0f0f0;">159.84</div>
<div class="t" style="right:651.2px;top:679.96px;font-size:9px;color:#f0f0f0;">0.00</div>
<div class="t" style="right:590.9px;top:679.96px;font-size:9px;color:#f0f0f0;">0.12</div>
<div class="t" style="left:856.6px;top:679.96px;font-size:9px;color:#f0f0f0;">17:21 24-09-20...</div>
<div class="t" style="left:931.5px;top:679.96px;font-size:9px;color:#f0f0f0;">17:21 24-09-20...</div>
<div class="t" style="left:1082.4px;top:679.96px;font-size:9px;color:#f0f0f0;">00:00</div>
<div class="t" style="right:230.70000000000005px;top:679.96px;font-size:9px;color:#f0f0f0;">1103.99</div>
<div class="t" style="right:170.5px;top:679.96px;font-size:9px;color:#f0f0f0;">1.50</div>
<div class="t" style="right:110.20000000000005px;top:679.96px;font-size:9px;color:#f0f0f0;">8.28</div>
<div class="t" style="right:50.299999999999955px;top:679.96px;font-size:9px;color:#f0f0f0;">0.00</div>
<div class="t" style="left:1397.2px;top:679.96px;font-size:9px;color:#f0f0f0;">RL</div>
<div class="t" style="right:982.0px;top:697.06px;font-size:9px;color:#f0f0f0;">2</div>
<div class="t" style="left:465.5px;top:697.06px;font-size:9px;color:#f0f0f0;">WP 2</div>
<div class="t" style="right:838.2px;top:697.06px;font-size:9px;color:#f0f0f0;">01° 15.949' N</div>
<div class="t" style="right:771.3px;top:697.06px;font-size:9px;color:#f0f0f0;">103° 50.193' E</div>
<div class="t" style="right:711.1px;top:697.06px;font-size:9px;color:#f0f0f0;">126.49</div>
<div class="t" style="right:651.2px;top:697.06px;font-size:9px;color:#f0f0f0;">0.12</div>
<div class="t" style="right:590.9px;top:697.06px;font-size:9px;color:#f0f0f0;">1.86</div>
<div class="t" style="left:856.6px;top:697.06px;font-size:9px;color:#f0f0f0;">17:22 24-09-20...</div>
<div class="t" style="left:931.5px;top:697.06px;font-size:9px;color:#f0f0f0;">17:22 24-09-20...</div>
<div class="t" style="left:1082.4px;top:697.06px;font-size:9px;color:#f0f0f0;">00:00</div>
<div class="t" style="right:230.70000000000005px;top:697.06px;font-size:9px;color:#f0f0f0;">1103.86</div>
<div class="t" style="right:170.5px;top:697.06px;font-size:9px;color:#f0f0f0;">1.50</div>
<div class="t" style="right:110.20000000000005px;top:697.06px;font-size:9px;color:#f0f0f0;">8.28</div>
<div class="t" style="right:50.299999999999955px;top:697.06px;font-size:9px;color:#f0f0f0;">13.00</div>
<div class="t" style="left:1397.2px;top:697.06px;font-size:9px;color:#f0f0f0;">RL</div>
<div class="t" style="right:982.0px;top:714.36px;font-size:9px;color:#f0f0f0;">3</div>
<div class="t" style="left:465.5px;top:714.36px;font-size:9px;color:#f0f0f0;">WP 3</div>
<div class="t" style="right:838.2px;top:714.36px;font-size:9px;color:#f0f0f0;">01° 14.845' N</div>
<div class="t" style="right:771.3px;top:714.36px;font-size:9px;color:#f0f0f0;">103° 51.686' E</div>
<div class="t" style="right:711.1px;top:714.36px;font-size:9px;color:#f0f0f0;">141.94</div>
<div class="t" style="right:651.2px;top:714.36px;font-size:9px;color:#f0f0f0;">1.98</div>
<div class="t" style="right:590.9px;top:714.36px;font-size:9px;color:#f0f0f0;">1.13</div>
<div class="t" style="left:856.6px;top:714.36px;font-size:9px;color:#f0f0f0;">17:31 24-09-20...</div>
<div class="t" style="left:931.5px;top:714.36px;font-size:9px;color:#f0f0f0;">17:31 24-09-20...</div>
<div class="t" style="left:1082.4px;top:714.36px;font-size:9px;color:#f0f0f0;">00:00</div>
<div class="t" style="right:230.70000000000005px;top:714.36px;font-size:9px;color:#f0f0f0;">1102.01</div>
<div class="t" style="right:170.5px;top:714.36px;font-size:9px;color:#f0f0f0;">1.50</div>
<div class="t" style="right:110.20000000000005px;top:714.36px;font-size:9px;color:#f0f0f0;">8.28</div>
<div class="t" style="right:50.299999999999955px;top:714.36px;font-size:9px;color:#f0f0f0;">13.00</div>
<div class="t" style="left:1397.2px;top:714.36px;font-size:9px;color:#f0f0f0;">RL</div>
<div class="a" style="left:1431px;top:625px;width:6px;height:51px;background:#252525"></div>
<svg style="left:391px;top:681px" width="8" height="9"><path d="M2 1 L6 4.5 L2 8 Z" fill="#e8e8e8"/></svg>
<div class="a" style="left:1431px;top:676.5px;width:6.5px;height:52px;background:#1e1e1e"></div>
<div class="a" style="left:1431.5px;top:677px;width:5.5px;height:19px;background:#5a6978;border-radius:3px"></div>
<div class="a" style="left:389px;top:729px;width:1041px;height:7.5px;background:#1f1f1f"></div>
<div class="a" style="left:463.4px;top:730.5px;width:333px;height:5.5px;background:#5a6978;border-radius:3px"></div>
<div class="a" style="left:403.9px;top:741px;width:33.5px;height:34px;background:#5a6877;border:1px solid #b9c2cb;color:#f4f4f4;font-size:9px;display:flex;align-items:center;justify-content:center;white-space:nowrap"><svg width="24" height="20" style="position:relative;left:1px;top:1px"><path d="M3 5 V17.5 H15.5 V9.5" fill="none" stroke="#e8e8e8" stroke-width="2.6"/><path d="M7 5 V10 H13 V5" fill="none" stroke="#e8e8e8" stroke-width="2"/><path d="M13 6 H19" stroke="#3db54a" stroke-width="2.4"/><path d="M18 2.5 L22 6 L18 9.5 Z" fill="#3db54a"/></svg><span></span></div>
<div class="a" style="left:452.2px;top:741px;width:112.69999999999999px;height:34px;background:#5a6877;border:1px solid #b9c2cb;color:#f4f4f4;font-size:9px;display:flex;align-items:center;justify-content:center;white-space:nowrap"><svg width="14" height="14" style="position:relative;margin-right:8px"><path d="M7 0.5 V13.5 M0.5 7 H13.5" stroke="#f0f0f0" stroke-width="1.8"/></svg><span>Create Waypoint</span></div>
<div class="a" style="left:580.4px;top:741px;width:112.30000000000007px;height:34px;background:#5a6877;border:1px solid #b9c2cb;color:#f4f4f4;font-size:9px;display:flex;align-items:center;justify-content:center;white-space:nowrap"><svg width="10" height="12" style="position:relative;margin-right:10px"><path d="M6.5 0.5 L1.5 7 H5 L3 11.5 L8.5 4.5 H5.2 Z" fill="#f0f0f0"/></svg><span>Create Event</span></div>
<div class="a" style="left:707.6px;top:741px;width:112.39999999999998px;height:34px;background:#5a6877;border:1px solid #b9c2cb;color:#f4f4f4;font-size:9px;display:flex;align-items:center;justify-content:center;white-space:nowrap"><svg width="14" height="14" style="position:relative;margin-right:10px"><path d="M2 12 L3 8.5 L10 1.5 L12.5 4 L5.5 11 Z" fill="#f0f0f0"/><path d="M1 13 L2 9.7 L4.3 12 Z" fill="#f0f0f0"/></svg><span>Edit</span></div>
<div class="a" style="left:835.4px;top:741px;width:112.60000000000002px;height:34px;background:#5a6877;border:1px solid #b9c2cb;color:#f4f4f4;font-size:9px;display:flex;align-items:center;justify-content:center;white-space:nowrap"><span>Calculate UKC</span></div>
<div class="a" style="left:962.6px;top:741px;width:112.80000000000007px;height:34px;background:#c3c3c3;border:1px solid #dcdcdc;color:#e6e6e6;font-size:9px;display:flex;align-items:center;justify-content:center;white-space:nowrap"><span>UKC Alerts</span></div>
<div class="t" style="left:1094px;top:751.96px;font-size:9px;color:#e8e8e8;">Distance:</div>
<div class="t" style="left:1137.9px;top:751.96px;font-size:9px;color:#e8e8e8;">1,103.99 nm</div>
<div class="t" style="left:1208.4px;top:751.96px;font-size:9px;color:#e8e8e8;">Passage Time:</div>
<div class="t" style="left:1271.2px;top:751.96px;font-size:9px;color:#e8e8e8;">3 days 14 hours 37 minutes</div>
</body></html>
